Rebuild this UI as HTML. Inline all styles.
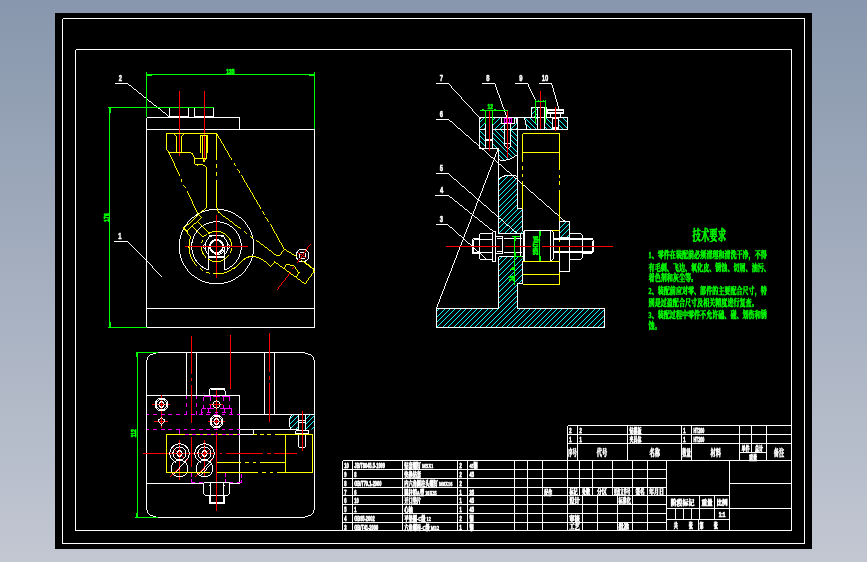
<!DOCTYPE html>
<html lang="zh-CN">
<head>
<meta charset="utf-8">
<title>CAD drawing</title>
<style>
html,body{margin:0;padding:0;background:#a6aec0;}
body{width:867px;height:562px;overflow:hidden;}
svg{display:block;}
text{white-space:pre;}
</style>
</head>
<body>
<svg width="867" height="562" viewBox="0 0 867 562" shape-rendering="crispEdges" fill="none" stroke-width="1" font-family="'Liberation Sans', 'Noto Sans CJK SC', sans-serif">
<defs><linearGradient id="bg" x1="0" y1="0" x2="0" y2="1"><stop offset="0" stop-color="#8897ad"/><stop offset="1" stop-color="#c2c7d2"/></linearGradient>
<clipPath id="h1"><path d="M298.5,429.5 L297.94,429.5 L297.02,429.5 L296.13,429.5 L295.27,429.5 L294.45,429.5 L293.68,429.5 L292.96,429.5 L292.29,429.5 L291.69,429.5 L291.14,429.03 L290.66,428.17 L290.25,427.28 L289.91,426.36 L289.65,425.42 L289.45,424.46 L289.34,423.48 L289.3,422.5 L289.34,421.52 L289.45,420.54 L289.65,419.58 L289.91,418.64 L290.25,417.72 L290.66,416.83 L291.14,415.97 L291.69,415.15 L292.29,414.5 L292.96,414.5 L293.68,414.5 L294.45,414.5 L295.27,414.5 L296.13,414.5 L297.02,414.5 L297.94,414.5 L298.5,414.5Z M305.5,414.5 L314.5,414.5 L314.5,429.5 L305.5,429.5Z" clip-rule="evenodd"/></clipPath>
<clipPath id="h2"><path d="M436.5,308.5 L498.5,308.5 L498.5,256.5 L522.5,256.5 L522.5,283.5 L517.5,283.5 L517.5,308.5 L604.5,308.5 L604.5,327.5 L436.5,327.5Z" clip-rule="evenodd"/></clipPath>
<clipPath id="h3"><path d="M498.5,233.5 L498.5,178.5 L498.5,179.14 L500.4,177.93 L502.3,176.93 L504.2,176.14 L506.1,175.56 L508,175.18 L509.9,175.01 L511.8,175.05 L513.7,175.29 L515.6,175.75 L517.5,176.41 L517.5,208.5 L522.5,208.5 L522.5,233.5Z" clip-rule="evenodd"/></clipPath>
<clipPath id="h4"><path d="M479.5,129.5 L517.5,129.5 L517.5,154.5 L515.6,155.77 L513.7,157.03 L511.8,158.09 L509.9,158.94 L508,159.59 L506.1,160.03 L504.2,160.26 L502.3,160.28 L500.4,160.05 L498.5,159.6 L498.5,148.5 L479.5,148.5Z M485.5,129.5 L492.5,129.5 L492.5,148.5 L485.5,148.5Z M504.5,129.5 L510.5,129.5 L510.5,146 L507.5,149 L504.5,146Z" clip-rule="evenodd"/></clipPath>
<clipPath id="h5"><path d="M479.5,117.5 L517.5,117.5 L517.5,129.5 L479.5,129.5Z M485.5,117.5 L492.5,117.5 L492.5,129.5 L485.5,129.5Z M501.5,117.5 L514,117.5 L514,123.5 L510.5,123.5 L510.5,129.5 L504.5,129.5 L504.5,123.5 L501.5,123.5Z" clip-rule="evenodd"/></clipPath>
<clipPath id="h6"><path d="M524.5,117.5 L567.5,117.5 L567.5,129.5 L527,129.5Z M537.5,117.5 L544,117.5 L544,129.5 L537.5,129.5Z M552.5,117.5 L558.5,117.5 L558.5,129.5 L552.5,129.5Z" clip-rule="evenodd"/></clipPath>
<clipPath id="h7"><path d="M531.5,107.5 L546.5,107.5 L546.5,117.5 L531.5,117.5Z M537.5,107.5 L544,107.5 L544,117.5 L537.5,117.5Z" clip-rule="evenodd"/></clipPath>
<clipPath id="h8"><path d="M559.5,221.5 L569.5,221.5 L569.5,237.5 L559.5,237.5Z" clip-rule="evenodd"/></clipPath>
</defs>
<rect x="0" y="0" width="867" height="562" fill="url(#bg)"/>
<g>
<rect x="55" y="13" width="757" height="536" fill="#000"/>
<polyline points="62.5,18.5 804.5,18.5 804.5,543.5 62.5,543.5 62.5,18.5" stroke="#fff"/>
<polyline points="75.5,49.5 791.5,49.5 791.5,530.5 75.5,530.5 75.5,49.5" stroke="#fff"/>
<polyline points="146.5,117.5 146.5,327.5 314.5,327.5 314.5,129.5" stroke="#fff"/>
<line x1="146.5" y1="129.5" x2="314.5" y2="129.5" stroke="#fff"/>
<line x1="146.5" y1="308.5" x2="314.5" y2="308.5" stroke="#fff"/>
<polyline points="146.5,117.5 239.5,117.5 239.5,129.5" stroke="#fff"/>
<polyline points="169.5,107.5 169.5,116.5 188.5,116.5 188.5,107.5" stroke="#fff"/>
<polyline points="194.5,107.5 194.5,116.5 213.5,116.5 213.5,107.5" stroke="#fff"/>
<path fill="#fff" stroke="none" d="M254.31,246L254.26,248.55L253.26,248.55L253.31,246ZM254.3,247.55L254.14,250.1L253.14,250.1L253.3,247.55ZM254.22,249.1L253.96,251.64L252.96,251.64L253.22,249.1ZM254.08,250.64L253.71,253.18L252.71,253.18L253.08,250.64ZM253.88,252.18L253.4,254.7L252.4,254.7L252.88,252.18ZM253.61,253.7L253.03,256.22L252.03,256.22L252.61,253.7ZM253.28,255.22L252.59,257.71L251.59,257.71L252.28,255.22ZM252.89,256.71L252.09,259.19L251.09,259.19L251.89,256.71ZM252.44,258.19L251.53,260.64L250.53,260.64L251.44,258.19ZM251.92,259.64L250.91,262.08L249.91,262.08L250.92,259.64ZM251.35,261.08L250.23,263.48L249.23,263.48L250.35,261.08ZM250.72,262.48L249.49,264.86L248.49,264.86L249.72,262.48ZM250.03,263.86L248.69,266.21L247.69,266.21L249.03,263.86ZM249.29,265.21L247.83,267.52L246.83,267.52L248.29,265.21ZM248.49,266.52L246.92,268.8L245.92,268.8L247.49,266.52ZM247.64,267.8L245.96,270.04L244.96,270.04L246.64,267.8ZM246.74,269.04L244.94,271.24L243.94,271.24L245.74,269.04ZM245.8,270.24L243.87,272.4L242.87,272.4L244.8,270.24ZM244.8,271.4L242.75,273.51L241.75,273.51L243.8,271.4ZM241.11,274.06L243.24,272.04L243.24,273.04L241.11,275.06ZM239.94,275.04L242.11,273.14L242.11,274.14L239.94,276.04ZM238.73,275.97L240.94,274.2L240.94,275.2L238.73,276.97ZM237.48,276.86L239.73,275.2L239.73,276.2L237.48,277.86ZM236.2,277.7L238.48,276.16L238.48,277.16L236.2,278.7ZM234.87,278.48L237.2,277.05L237.2,278.05L234.87,279.48ZM233.52,279.21L235.87,277.89L235.87,278.89L233.52,280.21ZM232.13,279.88L234.52,278.68L234.52,279.68L232.13,280.88ZM230.72,280.5L233.13,279.4L233.13,280.4L230.72,281.5ZM229.28,281.06L231.72,280.07L231.72,281.07L229.28,282.06ZM227.82,281.56L230.28,280.68L230.28,281.68L227.82,282.56ZM226.34,281.99L228.82,281.22L228.82,282.22L226.34,282.99ZM224.84,282.37L227.34,281.71L227.34,282.71L224.84,283.37ZM223.32,282.68L225.84,282.13L225.84,283.13L223.32,283.68ZM221.8,282.94L224.32,282.48L224.32,283.48L221.8,283.94ZM220.26,283.12L222.8,282.78L222.8,283.78L220.26,284.12ZM218.71,283.25L221.26,283.01L221.26,284.01L218.71,284.25ZM217.16,283.31L219.71,283.18L219.71,284.18L217.16,284.31ZM215.61,283.3L218.16,283.28L218.16,284.28L215.61,284.3ZM214.06,283.23L216.61,283.31L216.61,284.31L214.06,284.23ZM212.51,283.1L215.06,283.29L215.06,284.29L212.51,284.1ZM210.97,282.9L213.51,283.19L213.51,284.19L210.97,283.9ZM209.44,282.64L211.97,283.04L211.97,284.04L209.44,283.64ZM207.92,282.31L210.44,282.82L210.44,283.82L207.92,283.31ZM206.41,281.92L208.92,282.54L208.92,283.54L206.41,282.92ZM204.92,281.47L207.41,282.19L207.41,283.19L204.92,282.47ZM203.45,280.96L205.92,281.78L205.92,282.78L203.45,281.96ZM202,280.38L204.45,281.31L204.45,282.31L202,281.38ZM200.57,279.74L203,280.79L203,281.79L200.57,280.74ZM199.17,279.05L201.57,280.2L201.57,281.2L199.17,280.05ZM197.8,278.29L200.17,279.55L200.17,280.55L197.8,279.29ZM196.46,277.48L198.8,278.85L198.8,279.85L196.46,278.48ZM195.16,276.61L197.46,278.1L197.46,279.1L195.16,277.61ZM193.89,275.69L196.16,277.29L196.16,278.29L193.89,276.69ZM192.66,274.71L194.89,276.42L194.89,277.42L192.66,275.71ZM191.47,273.68L193.66,275.51L193.66,276.51L191.47,274.68ZM190.32,272.6L192.47,274.55L192.47,275.55L190.32,273.6ZM189.22,271.47L191.32,273.55L191.32,274.55L189.22,272.47ZM188.7,270.82L190.68,272.96L189.68,272.96L187.7,270.82ZM187.72,269.64L189.59,271.82L188.59,271.82L186.72,269.64ZM186.8,268.42L188.54,270.64L187.54,270.64L185.8,268.42ZM185.93,267.16L187.55,269.42L186.55,269.42L184.93,267.16ZM185.1,265.87L186.62,268.16L185.62,268.16L184.1,265.87ZM184.33,264.54L185.73,266.87L184.73,266.87L183.33,264.54ZM183.62,263.18L184.91,265.54L183.91,265.54L182.62,263.18ZM182.96,261.78L184.14,264.18L183.14,264.18L181.96,261.78ZM182.36,260.36L183.42,262.78L182.42,262.78L181.36,260.36ZM181.81,258.92L182.77,261.36L181.77,261.36L180.81,258.92ZM181.33,257.45L182.18,259.92L181.18,259.92L180.33,257.45ZM180.91,255.97L181.65,258.45L180.65,258.45L179.91,255.97ZM180.55,254.46L181.18,256.97L180.18,256.97L179.55,254.46ZM180.25,252.94L180.78,255.46L179.78,255.46L179.25,252.94ZM180.01,251.41L180.44,253.94L179.44,253.94L179.01,251.41ZM179.84,249.87L180.16,252.41L179.16,252.41L178.84,249.87ZM179.73,248.33L179.94,250.87L178.94,250.87L178.73,248.33ZM179.69,246.78L179.79,249.33L178.79,249.33L178.69,246.78ZM179.71,245.22L179.71,247.78L178.71,247.78L178.71,245.22ZM179.79,243.67L179.69,246.22L178.69,246.22L178.79,243.67ZM179.94,242.13L179.73,244.67L178.73,244.67L178.94,242.13ZM180.16,240.59L179.84,243.13L178.84,243.13L179.16,240.59ZM180.44,239.06L180.01,241.59L179.01,241.59L179.44,239.06ZM180.78,237.54L180.25,240.06L179.25,240.06L179.78,237.54ZM181.18,236.03L180.55,238.54L179.55,238.54L180.18,236.03ZM181.65,234.55L180.91,237.03L179.91,237.03L180.65,234.55ZM182.18,233.08L181.33,235.55L180.33,235.55L181.18,233.08ZM182.77,231.64L181.81,234.08L180.81,234.08L181.77,231.64ZM183.42,230.22L182.36,232.64L181.36,232.64L182.42,230.22ZM184.14,228.82L182.96,231.22L181.96,231.22L183.14,228.82ZM184.91,227.46L183.62,229.82L182.62,229.82L183.91,227.46ZM185.73,226.13L184.33,228.46L183.33,228.46L184.73,226.13ZM186.62,224.84L185.1,227.13L184.1,227.13L185.62,224.84ZM187.55,223.58L185.93,225.84L184.93,225.84L186.55,223.58ZM188.54,222.36L186.8,224.58L185.8,224.58L187.54,222.36ZM189.59,221.18L187.72,223.36L186.72,223.36L188.59,221.18ZM190.68,220.04L188.7,222.18L187.7,222.18L189.68,220.04ZM189.22,220.53L191.32,218.45L191.32,219.45L189.22,221.53ZM190.32,219.4L192.47,217.45L192.47,218.45L190.32,220.4ZM191.47,218.32L193.66,216.49L193.66,217.49L191.47,219.32ZM192.66,217.29L194.89,215.58L194.89,216.58L192.66,218.29ZM193.89,216.31L196.16,214.71L196.16,215.71L193.89,217.31ZM195.16,215.39L197.46,213.9L197.46,214.9L195.16,216.39ZM196.46,214.52L198.8,213.15L198.8,214.15L196.46,215.52ZM197.8,213.71L200.17,212.45L200.17,213.45L197.8,214.71ZM199.17,212.95L201.57,211.8L201.57,212.8L199.17,213.95ZM200.57,212.26L203,211.21L203,212.21L200.57,213.26ZM202,211.62L204.45,210.69L204.45,211.69L202,212.62ZM203.45,211.04L205.92,210.22L205.92,211.22L203.45,212.04ZM204.92,210.53L207.41,209.81L207.41,210.81L204.92,211.53ZM206.41,210.08L208.92,209.46L208.92,210.46L206.41,211.08ZM207.92,209.69L210.44,209.18L210.44,210.18L207.92,210.69ZM209.44,209.36L211.97,208.96L211.97,209.96L209.44,210.36ZM210.97,209.1L213.51,208.81L213.51,209.81L210.97,210.1ZM212.51,208.9L215.06,208.71L215.06,209.71L212.51,209.9ZM214.06,208.77L216.61,208.69L216.61,209.69L214.06,209.77ZM215.61,208.7L218.16,208.72L218.16,209.72L215.61,209.7ZM217.16,208.69L219.71,208.82L219.71,209.82L217.16,209.69ZM218.71,208.75L221.26,208.99L221.26,209.99L218.71,209.75ZM220.26,208.88L222.8,209.22L222.8,210.22L220.26,209.88ZM221.8,209.06L224.32,209.52L224.32,210.52L221.8,210.06ZM223.32,209.32L225.84,209.87L225.84,210.87L223.32,210.32ZM224.84,209.63L227.34,210.29L227.34,211.29L224.84,210.63ZM226.34,210.01L228.82,210.78L228.82,211.78L226.34,211.01ZM227.82,210.44L230.28,211.32L230.28,212.32L227.82,211.44ZM229.28,210.94L231.72,211.93L231.72,212.93L229.28,211.94ZM230.72,211.5L233.13,212.6L233.13,213.6L230.72,212.5ZM232.13,212.12L234.52,213.32L234.52,214.32L232.13,213.12ZM233.52,212.79L235.87,214.11L235.87,215.11L233.52,213.79ZM234.87,213.52L237.2,214.95L237.2,215.95L234.87,214.52ZM236.2,214.3L238.48,215.84L238.48,216.84L236.2,215.3ZM237.48,215.14L239.73,216.8L239.73,217.8L237.48,216.14ZM238.73,216.03L240.94,217.8L240.94,218.8L238.73,217.03ZM239.94,216.96L242.11,218.86L242.11,219.86L239.94,217.96ZM241.11,217.94L243.24,219.96L243.24,220.96L241.11,218.94ZM242.75,219.49L244.8,221.6L243.8,221.6L241.75,219.49ZM243.87,220.6L245.8,222.76L244.8,222.76L242.87,220.6ZM244.94,221.76L246.74,223.96L245.74,223.96L243.94,221.76ZM245.96,222.96L247.64,225.2L246.64,225.2L244.96,222.96ZM246.92,224.2L248.49,226.48L247.49,226.48L245.92,224.2ZM247.83,225.48L249.29,227.79L248.29,227.79L246.83,225.48ZM248.69,226.79L250.03,229.14L249.03,229.14L247.69,226.79ZM249.49,228.14L250.72,230.52L249.72,230.52L248.49,228.14ZM250.23,229.52L251.35,231.92L250.35,231.92L249.23,229.52ZM250.91,230.92L251.92,233.36L250.92,233.36L249.91,230.92ZM251.53,232.36L252.44,234.81L251.44,234.81L250.53,232.36ZM252.09,233.81L252.89,236.29L251.89,236.29L251.09,233.81ZM252.59,235.29L253.28,237.78L252.28,237.78L251.59,235.29ZM253.03,236.78L253.61,239.3L252.61,239.3L252.03,236.78ZM253.4,238.3L253.88,240.82L252.88,240.82L252.4,238.3ZM253.71,239.82L254.08,242.36L253.08,242.36L252.71,239.82ZM253.96,241.36L254.22,243.9L253.22,243.9L252.96,241.36ZM254.14,242.9L254.3,245.45L253.3,245.45L253.14,242.9ZM254.26,244.45L254.31,247L253.31,247L253.26,244.45Z"/>
<path fill="#fff" stroke="none" d="M205.65,268.34L208.8,269.61L208.8,270.61L205.65,269.34ZM203.59,267.21L206.65,268.8L206.65,269.8L203.59,268.21ZM201.64,265.9L204.59,267.79L204.59,268.79L201.64,266.9ZM199.82,264.4L202.64,266.61L202.64,267.61L199.82,265.4ZM198.13,262.73L200.82,265.27L200.82,266.27L198.13,263.73ZM197.17,261.46L199.57,264.2L198.57,264.2L196.17,261.46ZM195.89,259.58L197.97,262.46L196.97,262.46L194.89,259.58ZM194.78,257.58L196.54,260.58L195.54,260.58L193.78,257.58ZM193.85,255.48L195.31,258.58L194.31,258.58L192.85,255.48ZM193.12,253.3L194.27,256.48L193.27,256.48L192.12,253.3ZM192.59,251.06L193.43,254.3L192.43,254.3L191.59,251.06ZM192.28,248.77L192.8,252.06L191.8,252.06L191.28,248.77ZM192.17,246.46L192.39,249.77L191.39,249.77L191.17,246.46ZM192.28,244.14L192.19,247.46L191.19,247.46L191.28,244.14ZM192.61,241.84L192.21,245.14L191.21,245.14L191.61,241.84ZM193.16,239.58L192.44,242.84L191.44,242.84L192.16,239.58ZM193.91,237.37L192.89,240.58L191.89,240.58L192.91,237.37ZM194.87,235.24L193.54,238.37L192.54,238.37L193.87,235.24ZM196.03,233.2L194.39,236.24L193.39,236.24L195.03,233.2ZM197.38,231.27L195.43,234.2L194.43,234.2L196.38,231.27ZM198.92,229.47L196.64,232.27L195.64,232.27L197.92,229.47ZM200.62,227.82L198.02,230.47L197.02,230.47L199.62,227.82ZM199.13,228.24L201.9,225.9L201.9,226.9L199.13,229.24ZM200.9,226.67L203.81,224.65L203.81,225.65L200.9,227.67ZM202.81,225.28L205.83,223.58L205.83,224.58L202.81,226.28ZM204.83,224.08L207.94,222.69L207.94,223.69L204.83,225.08ZM206.94,223.08L210.14,222L210.14,223L206.94,224.08ZM209.14,222.29L212.39,221.51L212.39,222.51L209.14,223.29ZM211.39,221.7L214.68,221.24L214.68,222.24L211.39,222.7ZM213.68,221.33L217,221.18L217,222.18L213.68,222.33ZM216,221.18L219.32,221.33L219.32,222.33L216,222.18ZM218.32,221.24L221.61,221.7L221.61,222.7L218.32,222.24ZM220.61,221.51L223.86,222.29L223.86,223.29L220.61,222.51ZM222.86,222L226.06,223.08L226.06,224.08L222.86,223ZM225.06,222.69L228.17,224.08L228.17,225.08L225.06,223.69ZM227.17,223.58L230.19,225.28L230.19,226.28L227.17,224.58ZM229.19,224.65L232.1,226.67L232.1,227.67L229.19,225.65ZM231.1,225.9L233.87,228.24L233.87,229.24L231.1,226.9ZM233.38,227.82L235.98,230.47L234.98,230.47L232.38,227.82ZM235.08,229.47L237.36,232.27L236.36,232.27L234.08,229.47ZM236.62,231.27L238.57,234.2L237.57,234.2L235.62,231.27ZM237.97,233.2L239.61,236.24L238.61,236.24L236.97,233.2ZM239.13,235.24L240.46,238.37L239.46,238.37L238.13,235.24ZM240.09,237.37L241.11,240.58L240.11,240.58L239.09,237.37ZM240.84,239.58L241.56,242.84L240.56,242.84L239.84,239.58ZM241.39,241.84L241.79,245.14L240.79,245.14L240.39,241.84ZM241.72,244.14L241.81,247.46L240.81,247.46L240.72,244.14ZM241.83,246.46L241.61,249.77L240.61,249.77L240.83,246.46ZM241.72,248.77L241.2,252.06L240.2,252.06L240.72,248.77ZM241.41,251.06L240.57,254.3L239.57,254.3L240.41,251.06ZM240.88,253.3L239.73,256.48L238.73,256.48L239.88,253.3ZM240.15,255.48L238.69,258.58L237.69,258.58L239.15,255.48ZM239.22,257.58L237.46,260.58L236.46,260.58L238.22,257.58ZM238.11,259.58L236.03,262.46L235.03,262.46L237.11,259.58ZM236.83,261.46L234.43,264.2L233.43,264.2L235.83,261.46ZM232.18,265.27L234.87,262.73L234.87,263.73L232.18,266.27ZM230.36,266.61L233.18,264.4L233.18,265.4L230.36,267.61ZM228.41,267.79L231.36,265.9L231.36,266.9L228.41,268.79ZM226.35,268.8L229.41,267.21L229.41,268.21L226.35,269.8ZM224.2,269.61L227.35,268.34L227.35,269.34L224.2,270.61Z"/>
<line x1="208.5" y1="246.5" x2="208.5" y2="269.91" stroke="#fff"/>
<line x1="224.9" y1="246.5" x2="224.9" y2="269.91" stroke="#fff"/>
<path fill="#fff" stroke="none" d="M230.39,246L223.26,258.34L222.26,258.34L229.39,246Z"/>
<line x1="223.05" y1="257.84" x2="209.95" y2="257.84" stroke="#fff"/>
<path fill="#fff" stroke="none" d="M203.61,246L210.74,258.34L209.74,258.34L202.61,246ZM210.74,234.66L203.61,247L202.61,247L209.74,234.66Z"/>
<line x1="209.95" y1="235.16" x2="223.05" y2="235.16" stroke="#fff"/>
<path fill="#fff" stroke="none" d="M223.26,234.66L230.39,247L229.39,247L222.26,234.66Z"/>
<path fill="#fff" stroke="none" d="M209.52,237.05L211.69,235.72L211.69,236.72L209.52,238.05ZM210.69,236.25L212.95,235.22L212.95,236.22L210.69,237.25ZM211.95,235.61L214.27,234.88L214.27,235.88L211.95,236.61ZM213.27,235.13L215.62,234.69L215.62,235.69L213.27,236.13ZM214.62,234.81L217,234.67L217,235.67L214.62,235.81ZM216,234.67L218.38,234.81L218.38,235.81L216,235.67ZM217.38,234.69L219.73,235.13L219.73,236.13L217.38,235.69ZM218.73,234.88L221.05,235.61L221.05,236.61L218.73,235.88ZM220.05,235.22L222.31,236.25L222.31,237.25L220.05,236.22ZM221.31,235.72L223.48,237.05L223.48,238.05L221.31,236.72Z"/>
<path fill="#fff" stroke="none" d="M221.31,256.28L223.48,254.95L223.48,255.95L221.31,257.28ZM220.05,256.78L222.31,255.75L222.31,256.75L220.05,257.78ZM218.73,257.12L221.05,256.39L221.05,257.39L218.73,258.12ZM217.38,257.31L219.73,256.87L219.73,257.87L217.38,258.31ZM216,257.33L218.38,257.19L218.38,258.19L216,258.33ZM214.62,257.19L217,257.33L217,258.33L214.62,258.19ZM213.27,256.87L215.62,257.31L215.62,258.31L213.27,257.87ZM211.95,256.39L214.27,257.12L214.27,258.12L211.95,257.39ZM210.69,255.75L212.95,256.78L212.95,257.78L210.69,256.75ZM209.52,254.95L211.69,256.28L211.69,257.28L209.52,255.95Z"/>
<path fill="#fff" stroke="none" d="M227.46,242.14L228.1,244.21L227.1,244.21L226.46,242.14ZM227.85,243.21L228.27,245.32L227.27,245.32L226.85,243.21ZM228.12,244.32L228.34,246.44L227.34,246.44L227.12,244.32ZM228.29,245.44L228.29,247.56L227.29,247.56L227.29,245.44ZM228.34,246.56L228.12,248.68L227.12,248.68L227.34,246.56ZM228.27,247.68L227.85,249.79L226.85,249.79L227.27,247.68ZM228.1,248.79L227.46,250.86L226.46,250.86L227.1,248.79Z"/>
<path fill="#fff" stroke="none" d="M205.9,248.79L206.54,250.86L205.54,250.86L204.9,248.79ZM205.73,247.68L206.15,249.79L205.15,249.79L204.73,247.68ZM205.66,246.56L205.88,248.68L204.88,248.68L204.66,246.56ZM205.71,245.44L205.71,247.56L204.71,247.56L204.71,245.44ZM205.88,244.32L205.66,246.44L204.66,246.44L204.88,244.32ZM206.15,243.21L205.73,245.32L204.73,245.32L205.15,243.21ZM206.54,242.14L205.9,244.21L204.9,244.21L205.54,242.14Z"/>
<line x1="210" y1="256.5" x2="223" y2="256.5" stroke="#fff"/>
<path fill="#fff" stroke="none" fill-rule="evenodd" d="M209.1,246.5 a7.4,7.4 0 1 0 14.8,0 a7.4,7.4 0 1 0 -14.8,0 Z M211,246.5 a5.5,5.5 0 1 0 11,0 a5.5,5.5 0 1 0 -11,0 Z"/>
<path fill="#fff" stroke="none" d="M225.29,248.17L224.47,250.48L223.47,250.48L224.29,248.17ZM224.93,249.48L223.69,251.68L222.69,251.68L223.93,249.48ZM224.37,250.68L222.71,252.76L221.71,252.76L223.37,250.68ZM221.08,253.14L223.11,251.32L223.11,252.32L221.08,254.14ZM219.91,253.75L222.08,252.37L222.08,253.37L219.91,254.75ZM218.64,254.19L220.91,253.22L220.91,254.22L218.64,255.19ZM217.3,254.42L219.64,253.85L219.64,254.85L217.3,255.42ZM215.92,254.44L218.3,254.26L218.3,255.26L215.92,255.44ZM214.54,254.23L216.92,254.45L216.92,255.45L214.54,255.23Z"/>
<path fill="#fff" stroke="none" d="M309.36,255L309.07,257.45L308.07,257.45L308.36,255ZM309.31,256.45L308.45,258.83L307.45,258.83L308.31,256.45ZM308.96,257.83L307.5,260.05L306.5,260.05L307.96,257.83ZM305.76,260.53L307.83,258.58L307.83,259.58L305.76,261.53ZM304.5,261.07L306.76,259.76L306.76,260.76L304.5,262.07ZM303.09,261.35L305.5,260.64L305.5,261.64L303.09,262.35ZM301.63,261.32L304.09,261.18L304.09,262.18L301.63,262.32ZM300.19,260.95L302.63,261.38L302.63,262.38L300.19,261.95ZM298.85,260.24L301.19,261.25L301.19,262.25L298.85,261.24ZM297.68,259.21L299.85,260.83L299.85,261.83L297.68,260.21ZM297.32,258.46L299.1,260.58L298.1,260.58L296.32,258.46ZM296.83,257.15L297.99,259.46L296.99,259.46L295.83,257.15ZM296.62,255.73L297.2,258.15L296.2,258.15L295.62,255.73ZM296.74,254.27L296.74,256.73L295.74,256.73L295.74,254.27ZM297.2,252.85L296.62,255.27L295.62,255.27L296.2,252.85ZM297.99,251.54L296.83,253.85L295.83,253.85L296.99,251.54ZM299.1,250.42L297.32,252.54L296.32,252.54L298.1,250.42ZM297.68,250.79L299.85,249.17L299.85,250.17L297.68,251.79ZM298.85,249.76L301.19,248.75L301.19,249.75L298.85,250.76ZM300.19,249.05L302.63,248.62L302.63,249.62L300.19,250.05ZM301.63,248.68L304.09,248.82L304.09,249.82L301.63,249.68ZM303.09,248.65L305.5,249.36L305.5,250.36L303.09,249.65ZM304.5,248.93L306.76,250.24L306.76,251.24L304.5,249.93ZM305.76,249.47L307.83,251.42L307.83,252.42L305.76,250.47ZM307.5,250.95L308.96,253.17L307.96,253.17L306.5,250.95ZM308.45,252.17L309.31,254.55L308.31,254.55L307.45,252.17ZM309.07,253.55L309.36,256L308.36,256L308.07,253.55Z"/>
<path fill="#fff" stroke="none" d="M306.41,255L305.91,257.34L304.91,257.34L305.41,255ZM306.38,256.34L304.84,258.45L303.84,258.45L305.38,256.34ZM303.02,258.43L305.21,257.16L305.21,258.16L303.02,259.43ZM301.66,258.33L304.02,258.09L304.02,259.09L301.66,259.33ZM300.35,257.7L302.66,258.44L302.66,259.44L300.35,258.7ZM299.33,256.49L301.35,258.31L301.35,259.31L299.33,257.49ZM299.55,255.69L300.55,257.94L299.55,257.94L298.55,255.69ZM299.77,254.31L299.77,256.69L298.77,256.69L298.77,254.31ZM300.55,253.06L299.55,255.31L298.55,255.31L299.55,253.06ZM299.33,253.51L301.35,251.69L301.35,252.69L299.33,254.51ZM300.35,252.3L302.66,251.56L302.66,252.56L300.35,253.3ZM301.66,251.67L304.02,251.91L304.02,252.91L301.66,252.67ZM303.02,251.57L305.21,252.84L305.21,253.84L303.02,252.57ZM304.84,252.55L306.38,254.66L305.38,254.66L303.84,252.55ZM305.91,253.66L306.41,256L305.41,256L304.91,253.66Z"/>
<line x1="115" y1="83.5" x2="127.5" y2="83.5" stroke="#fff"/>
<path fill="#fff" stroke="none" d="M127,82.6L168.8,115.9L168.8,116.9L127,83.6Z"/>
<line x1="114" y1="241.5" x2="127.6" y2="241.5" stroke="#fff"/>
<path fill="#fff" stroke="none" d="M127.61,241L162.79,277L161.79,277L126.61,241Z"/>
<line x1="146.5" y1="72" x2="146.5" y2="117" stroke="#0f0"/>
<line x1="314.5" y1="72" x2="314.5" y2="129" stroke="#0f0"/>
<line x1="146.5" y1="74.5" x2="314.5" y2="74.5" stroke="#0f0"/>
<polygon points="147,74 152,74 152,76 147,76" fill="#0f0" stroke="none"/>
<polygon points="309,74 314,74 314,76 309,76" fill="#0f0" stroke="none"/>
<line x1="108" y1="107.5" x2="213.5" y2="107.5" stroke="#0f0"/>
<line x1="109.5" y1="107.5" x2="109.5" y2="327.5" stroke="#0f0"/>
<line x1="108" y1="327.5" x2="146.5" y2="327.5" stroke="#0f0"/>
<polygon points="109,108 111,108 111,113 109,113" fill="#0f0" stroke="none"/>
<polygon points="109,322 111,322 111,327 109,327" fill="#0f0" stroke="none"/>
<line x1="179.5" y1="91" x2="179.5" y2="155.5" stroke="#f00"/>
<line x1="204.5" y1="91" x2="204.5" y2="161" stroke="#f00"/>
<line x1="185" y1="246.5" x2="248" y2="246.5" stroke="#f00"/>
<line x1="216.5" y1="215" x2="216.5" y2="278" stroke="#f00"/>
<path fill="#f00" stroke="none" d="M291.59,271.8L277.31,290.2L276.31,290.2L290.59,271.8Z"/>
<path fill="#f00" stroke="none" d="M295.64,265.5L292.46,269.1L291.46,269.1L294.64,265.5Z"/>
<path fill="#f00" stroke="none" d="M310.65,244.4L297.75,263L296.75,263L309.65,244.4Z"/>
<path fill="#f00" stroke="none" d="M298.3,252.38L306.1,257.42L306.1,258.42L298.3,253.38Z"/>
<path fill="#ff0" stroke="none" d="M166.57,149.1L170.03,153.1L169.03,153.1L165.57,149.1Z"/>
<polyline points="166.5,149.6 166.5,133.5 216.5,133.5 216.5,159.5" stroke="#ff0"/>
<line x1="216.5" y1="163.5" x2="216.5" y2="168" stroke="#ff0"/>
<line x1="216.5" y1="172" x2="216.5" y2="175.5" stroke="#ff0"/>
<line x1="216.5" y1="179.5" x2="216.5" y2="207" stroke="#ff0"/>
<line x1="169.1" y1="152.6" x2="190.6" y2="152.6" stroke="#ff0"/>
<path fill="#ff0" stroke="none" d="M190.1,151.85L193.1,153.35L193.1,154.35L190.1,152.85ZM192.88,153.1L194.72,157.3L193.72,157.3L191.88,153.1Z"/>
<line x1="194" y1="156.8" x2="194" y2="162.4" stroke="#ff0"/>
<path fill="#ff0" stroke="none" d="M194.17,161.9L196.23,165L195.23,165L193.17,161.9ZM194.9,163.84L197.5,164.66L197.5,165.66L194.9,164.84ZM196.5,164.57L201.5,163.83L201.5,164.83L196.5,165.57ZM200.5,163.72L204.5,165.18L204.5,166.18L200.5,164.72ZM203.5,164.67L207.1,167.03L207.1,168.03L203.5,165.67Z"/>
<line x1="206.6" y1="167.2" x2="206.8" y2="207" stroke="#ff0"/>
<line x1="194.6" y1="158" x2="205.7" y2="158" stroke="#ff0"/>
<path fill="#ff0" stroke="none" d="M174.02,133L177.38,136.5L176.38,136.5L173.02,133Z"/>
<line x1="176.4" y1="136" x2="176.4" y2="152.6" stroke="#ff0"/>
<path fill="#ff0" stroke="none" d="M181.1,135.95L184.9,132.55L184.9,133.55L181.1,136.95Z"/>
<line x1="181.6" y1="136" x2="181.6" y2="152.6" stroke="#ff0"/>
<polyline points="200.7,152.6 200.7,135.3 207.7,135.3 207.7,152.6" stroke="#ff0"/>
<line x1="202" y1="135.3" x2="202" y2="158" stroke="#ff0"/>
<line x1="206.4" y1="135.3" x2="206.4" y2="158" stroke="#ff0"/>
<path fill="#ff0" stroke="none" d="M202.12,157.5L205.18,161.5L204.18,161.5L201.12,157.5ZM207.25,157.5L204.45,161.5L203.45,161.5L206.25,157.5Z"/>
<path fill="#ff0" stroke="none" d="M217.21,133.5L232.49,160L231.49,160L216.21,133.5Z"/>
<path fill="#ff0" stroke="none" d="M234.38,163.1L236.42,166.3L235.42,166.3L233.38,163.1Z"/>
<path fill="#ff0" stroke="none" d="M237.79,168.7L240.41,172.9L239.41,172.9L236.79,168.7Z"/>
<path fill="#ff0" stroke="none" d="M241.71,175L261.29,208.5L260.29,208.5L240.71,175Z"/>
<path fill="#ff0" stroke="none" d="M262.7,211L264.8,214.5L263.8,214.5L261.7,211Z"/>
<path fill="#ff0" stroke="none" d="M266.21,217L268.79,221.5L267.79,221.5L265.21,217Z"/>
<path fill="#ff0" stroke="none" d="M270.72,224L285.08,249.7L284.08,249.7L269.72,224Z"/>
<path fill="#ff0" stroke="none" d="M169.37,152.1L180.23,176L179.23,176L168.37,152.1Z"/>
<path fill="#ff0" stroke="none" d="M181.07,178.5L182.53,181.7L181.53,181.7L180.07,178.5Z"/>
<path fill="#ff0" stroke="none" d="M184.24,185L185.96,188.3L184.96,188.3L183.24,185Z"/>
<path fill="#ff0" stroke="none" d="M187.46,191L198.54,214L197.54,214L186.46,191Z"/>
<path fill="#ff0" stroke="none" d="M183.4,228.27L207.3,206.03L207.3,207.03L183.4,229.27ZM183.4,227.36L187.6,231.04L187.6,232.04L183.4,228.36ZM186.6,231.08L202.1,216.22L202.1,217.22L186.6,232.08ZM197.3,212.51L202.1,217.19L202.1,218.19L197.3,213.51Z"/>
<path fill="#ff0" stroke="none" d="M184.02,227.8L187.58,232.5L186.58,232.5L183.02,227.8ZM186.84,231.5L190.26,236.2L189.26,236.2L185.84,231.5Z"/>
<path fill="#ff0" stroke="none" d="M191.6,235.92L190.74,238.26L189.74,238.26L190.6,235.92ZM191.08,237.26L190.35,239.63L189.35,239.63L190.08,237.26ZM190.63,238.63L190.03,241.02L189.03,241.02L189.63,238.63ZM190.26,240.02L189.79,242.42L188.79,242.42L189.26,240.02ZM189.96,241.42L189.61,243.83L188.61,243.83L188.96,241.42ZM189.73,242.83L189.51,245.26L188.51,245.26L188.73,242.83ZM189.57,244.26L189.48,246.68L188.48,246.68L188.57,244.26ZM189.49,245.68L189.53,248.11L188.53,248.11L188.49,245.68ZM189.49,247.11L189.65,249.54L188.65,249.54L188.49,247.11ZM189.56,248.54L189.85,250.96L188.85,250.96L188.56,248.54ZM189.7,249.96L190.11,252.36L189.11,252.36L188.7,249.96ZM189.92,251.36L190.46,253.76L189.46,253.76L188.92,251.36ZM190.2,252.76L190.87,255.13L189.87,255.13L189.2,252.76ZM190.56,254.13L191.36,256.49L190.36,256.49L189.56,254.13ZM190.99,255.49L191.91,257.82L190.91,257.82L189.99,255.49ZM191.49,256.82L192.54,259.11L191.54,259.11L190.49,256.82ZM192.05,258.11L193.24,260.38L192.24,260.38L191.05,258.11ZM192.68,259.38L194,261.61L193,261.61L191.68,259.38ZM193.37,260.61L194.82,262.8L193.82,262.8L192.37,260.61ZM194.12,261.8L195.71,263.95L194.71,263.95L193.12,261.8ZM194.93,262.95L196.67,265.05L195.67,265.05L193.93,262.95ZM195.79,264.05L197.68,266.1L196.68,266.1L194.79,264.05Z"/>
<path fill="#ff0" stroke="none" d="M199.84,267.89L201.42,269.02L201.42,270.02L199.84,268.89ZM200.42,268.33L202.02,269.4L202.02,270.4L200.42,269.33ZM201.02,268.75L202.63,269.76L202.63,270.76L201.02,269.75ZM201.63,269.15L203.25,270.11L203.25,271.11L201.63,270.15Z"/>
<path fill="#ff0" stroke="none" d="M206.14,271.49L207.93,272.15L207.93,273.15L206.14,272.49ZM206.93,271.8L208.73,272.39L208.73,273.39L206.93,272.8ZM207.73,272.08L209.54,272.62L209.54,273.62L207.73,273.08ZM208.54,272.33L210.35,272.82L210.35,273.82L208.54,273.33Z"/>
<path fill="#ff0" stroke="none" d="M212.65,273.25L215.05,273.48L215.05,274.48L212.65,274.25ZM214.05,273.41L216.46,273.52L216.46,274.52L214.05,274.41ZM215.46,273.5L217.87,273.48L217.87,274.48L215.46,274.5ZM216.87,273.51L219.28,273.38L219.28,274.38L216.87,274.51ZM218.28,273.46L220.68,273.2L220.68,274.2L218.28,274.46ZM219.68,273.33L222.07,272.95L222.07,273.95L219.68,274.33ZM221.07,273.14L223.45,272.63L223.45,273.63L221.07,274.14ZM222.45,272.87L224.81,272.23L224.81,273.23L222.45,273.87ZM223.81,272.53L226.15,271.77L226.15,272.77L223.81,273.53ZM225.15,272.12L227.47,271.24L227.47,272.24L225.15,273.12ZM226.47,271.65L228.76,270.64L228.76,271.64L226.47,272.65ZM227.76,271.11L230.02,269.97L230.02,270.97L227.76,272.11ZM229.02,270.51L231.24,269.24L231.24,270.24L229.02,271.51ZM230.24,269.85L232.43,268.44L232.43,269.44L230.24,270.85ZM231.43,269.12L233.57,267.59L233.57,268.59L231.43,270.12ZM232.57,268.34L234.68,266.67L234.68,267.67L232.57,269.34Z"/>
<path fill="#ff0" stroke="none" d="M196.8,220.82L208.9,232.48L208.9,233.48L196.8,221.82Z"/>
<path fill="#ff0" stroke="none" d="M208.17,233.24L210.47,232L210.47,233L208.17,234.24ZM209.47,232.48L211.84,231.5L211.84,232.5L209.47,233.48ZM210.84,231.86L213.25,231.12L213.25,232.12L210.84,232.86ZM212.25,231.37L214.7,230.87L214.7,231.87L212.25,232.37ZM213.7,231.03L216.17,230.77L216.17,231.77L213.7,232.03ZM215.17,230.83L217.64,230.81L217.64,231.81L215.17,231.83ZM216.64,230.77L219.12,230.99L219.12,231.99L216.64,231.77ZM218.12,230.85L220.57,231.32L220.57,232.32L218.12,231.85ZM219.57,231.08L221.98,231.79L221.98,232.79L219.57,232.08ZM220.98,231.44L223.36,232.39L223.36,233.39L220.98,232.44ZM222.36,231.93L224.67,233.13L224.67,234.13L222.36,232.93ZM223.67,232.55L225.9,234.01L225.9,235.01L223.67,233.55ZM224.9,233.28L227.06,235L227.06,236L224.9,234.28ZM226.06,234.12L228.12,236.12L228.12,237.12L226.06,235.12ZM227.69,235.63L229.49,237.76L228.49,237.76L226.69,235.63ZM228.73,236.76L230.26,238.98L229.26,238.98L227.73,236.76ZM229.63,237.98L230.91,240.27L229.91,240.27L228.63,237.98ZM230.41,239.27L231.43,241.62L230.43,241.62L229.41,239.27ZM231.06,240.62L231.83,243.03L230.83,243.03L230.06,240.62ZM231.56,242.03L232.1,244.47L231.1,244.47L230.56,242.03ZM231.93,243.47L232.22,245.94L231.22,245.94L230.93,243.47Z"/>
<path fill="#ff0" stroke="none" d="M192.2,225.92L203.3,236.58L203.3,237.58L192.2,226.92ZM202.3,236.34L207,234.06L207,235.06L202.3,237.34Z"/>
<path fill="#ff0" stroke="none" d="M232.14,248.12L231.78,250.16L230.78,250.16L231.14,248.12ZM231.99,249.16L231.49,251.19L230.49,251.19L230.99,249.16ZM231.77,250.19L231.12,252.2L230.12,252.2L230.77,250.19ZM231.49,251.2L230.68,253.18L229.68,253.18L230.49,251.2Z"/>
<path fill="#ff0" stroke="none" d="M229.39,255.36L227.97,257.07L226.97,257.07L228.39,255.36ZM228.85,256.07L227.28,257.75L226.28,257.75L227.85,256.07ZM226.07,257.85L227.75,256.28L227.75,257.28L226.07,258.85ZM225.36,258.39L227.07,256.97L227.07,257.97L225.36,259.39Z"/>
<path fill="#ff0" stroke="none" d="M221.94,260.23L224.14,259.18L224.14,260.18L221.94,261.23ZM220.7,260.64L222.94,259.8L222.94,260.8L220.7,261.64ZM219.42,260.95L221.7,260.32L221.7,261.32L219.42,261.95ZM218.12,261.14L220.42,260.72L220.42,261.72L218.12,262.14ZM216.8,261.23L219.12,261L219.12,262L216.8,262.23ZM215.47,261.2L217.8,261.17L217.8,262.17L215.47,262.2ZM214.15,261.05L216.47,261.23L216.47,262.23L214.15,262.05ZM212.84,260.78L215.15,261.17L215.15,262.17L212.84,261.78ZM211.56,260.41L213.84,261L213.84,262L211.56,261.41ZM210.31,259.92L212.56,260.71L212.56,261.71L210.31,260.92ZM209.1,259.32L211.31,260.32L211.31,261.32L209.1,260.32ZM207.95,258.61L210.1,259.83L210.1,260.83L207.95,259.61Z"/>
<path fill="#ff0" stroke="none" d="M205.11,256.04L206.92,257.93L205.92,257.93L204.11,256.04ZM204.4,255.08L205.99,257.04L204.99,257.04L203.4,255.08ZM203.77,254.05L205.15,256.08L204.15,256.08L202.77,254.05ZM203.21,252.98L204.39,255.05L203.39,255.05L202.21,252.98ZM202.74,251.86L203.73,253.98L202.73,253.98L201.74,251.86ZM202.36,250.7L203.16,252.86L202.16,252.86L201.36,250.7ZM202.07,249.51L202.68,251.7L201.68,251.7L201.07,249.51ZM201.88,248.29L202.31,250.51L201.31,250.51L200.88,248.29ZM201.78,247.06L202.03,249.29L201.03,249.29L200.78,247.06Z"/>
<path fill="#ff0" stroke="none" d="M202.72,241.24L202.23,242.81L201.23,242.81L201.72,241.24ZM202.94,240.68L202.39,242.24L201.39,242.24L201.94,240.68ZM203.18,240.12L202.56,241.68L201.56,241.68L202.18,240.12ZM203.45,239.58L202.76,241.12L201.76,241.12L202.45,239.58Z"/>
<path fill="#ff0" stroke="none" d="M216.79,206.5L219.31,212.6L218.31,212.6L215.79,206.5ZM218.1,211.16L222.3,214.84L222.3,215.84L218.1,212.16ZM221.3,214.06L229.7,219.84L229.7,220.84L221.3,215.06ZM228.7,219.1L239,227.3L239,228.3L228.7,220.1ZM238,226.7L241.3,228L241.3,229L238,227.7Z"/>
<path fill="#ff0" stroke="none" d="M244,230.59L247.3,233.31L247.3,234.31L244,231.59Z"/>
<path fill="#ff0" stroke="none" d="M249.7,235.34L252.5,237.36L252.5,238.36L249.7,236.34Z"/>
<path fill="#ff0" stroke="none" d="M255.5,239.12L276.7,255.18L276.7,256.18L255.5,240.12Z"/>
<line x1="276.2" y1="255.3" x2="279.7" y2="255.3" stroke="#ff0"/>
<path fill="#ff0" stroke="none" d="M285.18,248.8L279.82,255.8L278.82,255.8L284.18,248.8ZM283.8,248.51L296.8,256.09L296.8,257.09L283.8,249.51Z"/>
<path fill="#ff0" stroke="none" d="M301,259.63L314,269.27L314,270.27L301,260.63Z"/>
<path fill="#ff0" stroke="none" d="M240.97,262.5L234.83,269L233.83,269L239.97,262.5ZM239.5,262.96L244.5,258.34L244.5,259.34L239.5,263.96ZM243.5,259.06L248.5,256.44L248.5,257.44L243.5,260.06ZM247.5,256.8L253.6,255.6L253.6,256.6L247.5,257.8ZM252.6,255.57L258.5,257.13L258.5,258.13L252.6,256.57ZM257.5,256.75L264,259.95L264,260.95L257.5,257.75ZM263,259.26L271.2,266.54L271.2,267.54L263,260.26ZM275.88,261.7L270.72,267.1L269.72,267.1L274.88,261.7ZM274.4,261.36L284.3,268.14L284.3,269.14L274.4,262.36ZM283.3,267.43L304.5,283.17L304.5,284.17L283.3,268.43ZM303.5,282.89L306.2,282.41L306.2,283.41L303.5,283.89ZM314.66,271.3L305.84,283.5L304.84,283.5L313.66,271.3ZM313.6,268.4L314.4,272.3L313.4,272.3L312.6,268.4ZM304.6,261.07L313.7,268.83L313.7,269.83L304.6,262.07Z"/>
<path fill="#ff0" stroke="none" d="M287.44,263.7L283.96,268.8L282.96,268.8L286.44,263.7ZM286.1,263.58L294.7,265.62L294.7,266.62L286.1,264.58ZM294.37,265.5L299.63,273.4L298.63,273.4L293.37,265.5ZM299.58,272.4L296.72,277.5L295.72,277.5L298.58,272.4Z"/>
<path fill="#fff" stroke="none" d="M148.58,357L146.82,362L145.82,362L147.58,357ZM151.5,354.4L147.9,358L146.9,358L150.5,354.4ZM150,354.6L155.2,352.5L155.2,353.5L150,355.6ZM154.2,352.81L158.5,351.89L158.5,352.89L154.2,353.81Z"/>
<path fill="#fff" stroke="none" d="M313.43,357L315.18,362L314.18,362L312.43,357ZM310,353.9L313.6,357.5L313.6,358.5L310,354.9ZM305.8,352.5L311,354.6L311,355.6L305.8,353.5ZM302.5,351.89L306.8,352.81L306.8,353.81L302.5,352.89Z"/>
<path fill="#fff" stroke="none" d="M315.18,508L313.43,513L312.43,513L314.18,508ZM310,515.1L313.6,511.5L313.6,512.5L310,516.1ZM305.8,516.5L311,514.4L311,515.4L305.8,517.5ZM302.5,517.11L306.8,516.19L306.8,517.19L302.5,518.11Z"/>
<path fill="#fff" stroke="none" d="M146.82,508L148.58,513L147.58,513L145.82,508ZM147.9,512L151.5,515.6L150.5,515.6L146.9,512ZM150,514.4L155.2,516.5L155.2,517.5L150,515.4ZM154.2,516.19L158.5,517.11L158.5,518.11L154.2,517.19Z"/>
<line x1="158" y1="352.5" x2="303" y2="352.5" stroke="#fff"/>
<line x1="158" y1="517.5" x2="303" y2="517.5" stroke="#fff"/>
<line x1="146.5" y1="361.5" x2="146.5" y2="508.5" stroke="#fff"/>
<line x1="314.5" y1="361.5" x2="314.5" y2="508.5" stroke="#fff"/>
<line x1="186.5" y1="352.5" x2="186.5" y2="395.5" stroke="#fff"/>
<line x1="196.5" y1="352.5" x2="196.5" y2="395.5" stroke="#fff"/>
<line x1="264.5" y1="352.5" x2="264.5" y2="414.5" stroke="#fff"/>
<line x1="274.5" y1="352.5" x2="274.5" y2="414.5" stroke="#fff"/>
<polyline points="146.5,395.5 239.5,395.5 239.5,483.5 229.5,483.5" stroke="#fff"/>
<line x1="146.5" y1="483.5" x2="203.5" y2="483.5" stroke="#fff"/>
<line x1="239.5" y1="414.5" x2="314.5" y2="414.5" stroke="#fff"/>
<line x1="239.5" y1="429.5" x2="295" y2="429.5" stroke="#fff"/>
<polyline points="239.5,434.5 253.5,434.5 253.5,429.5" stroke="#fff"/>
<path d="M209.5,395.5 V390.5 Q209.5,388.5 211.5,388.5 H223 Q225,388.5 225,390.5 V395.5" stroke="#fff"/>
<line x1="210.5" y1="389.5" x2="224" y2="389.5" stroke="#fff"/>
<line x1="203.5" y1="482.5" x2="203.5" y2="493" stroke="#fff"/>
<path fill="#fff" stroke="none" d="M203.6,492.5L206.4,496L205.4,496L202.6,492.5Z"/>
<line x1="205.5" y1="495.5" x2="227.5" y2="495.5" stroke="#fff"/>
<path fill="#fff" stroke="none" d="M230.4,492.5L227.6,496L226.6,496L229.4,492.5Z"/>
<line x1="229.5" y1="493" x2="229.5" y2="482.5" stroke="#fff"/>
<line x1="210.5" y1="482.5" x2="210.5" y2="495.5" stroke="#fff"/>
<line x1="223.5" y1="482.5" x2="223.5" y2="495.5" stroke="#fff"/>
<polyline points="209.5,495.5 224.5,495.5 224.5,503.5 209.5,503.5 209.5,495.5" stroke="#fff"/>
<polyline points="210.5,495.5 223.5,495.5 223.5,502.5 210.5,502.5 210.5,495.5" stroke="#fff"/>
<path clip-path="url(#h1)" d="M276,432.5L298,410.5L298,411.5L276,433.5ZM281,432.5L303,410.5L303,411.5L281,433.5ZM286,432.5L308,410.5L308,411.5L286,433.5ZM292,432.5L314,410.5L314,411.5L292,433.5ZM297,432.5L319,410.5L319,411.5L297,433.5ZM302,432.5L324,410.5L324,411.5L302,433.5ZM308,432.5L330,410.5L330,411.5L308,433.5Z" fill="#0ff" stroke="none"/>
<polyline points="297.94,429.5 297.02,429.5 296.13,429.5 295.27,429.5 294.45,429.5 293.68,429.5 292.96,429.5 292.29,429.5 291.69,429.5" stroke="#fff"/>
<path fill="#fff" stroke="none" d="M290.64,428.1L292.19,429.43L292.19,430.43L290.64,429.1ZM290.88,427.67L291.92,429.53L290.92,429.53L289.88,427.67ZM290.52,426.78L291.39,428.67L290.39,428.67L289.52,426.78ZM290.23,425.86L290.94,427.78L289.94,427.78L289.23,425.86Z"/>
<polyline points="289.91,426.36 289.65,425.42 289.45,424.46 289.34,423.48 289.3,422.5 289.34,421.52 289.45,420.54 289.65,419.58 289.91,418.64" stroke="#fff"/>
<path fill="#fff" stroke="none" d="M290.94,417.22L290.23,419.14L289.23,419.14L289.94,417.22ZM291.39,416.33L290.52,418.22L289.52,418.22L290.39,416.33ZM291.92,415.47L290.88,417.33L289.88,417.33L290.92,415.47ZM292.52,414.65L291.31,416.47L290.31,416.47L291.52,414.65ZM293.26,414L291.72,415.65L290.72,415.65L292.26,414Z"/>
<polyline points="292.29,414.5 292.96,414.5 293.68,414.5 294.45,414.5 295.27,414.5 296.13,414.5 297.02,414.5 297.94,414.5" stroke="#fff"/>
<line x1="298.5" y1="414.5" x2="298.5" y2="429.5" stroke="#fff"/>
<line x1="305.5" y1="414.5" x2="305.5" y2="429.5" stroke="#fff"/>
<line x1="298.5" y1="420.5" x2="305.5" y2="420.5" stroke="#fff"/>
<line x1="298.5" y1="422.5" x2="305.5" y2="422.5" stroke="#fff"/>
<polyline points="295.5,430.5 308.5,430.5 308.5,433.5 295.5,433.5 295.5,430.5" stroke="#fff"/>
<path d="M298.5,434.5 V445.5 Q298.5,447.5 300.5,447.5 H303.5 Q305.5,447.5 305.5,445.5 V434.5" stroke="#fff"/>
<line x1="136" y1="352.5" x2="158" y2="352.5" stroke="#0f0"/>
<line x1="137.5" y1="352.5" x2="137.5" y2="517.5" stroke="#0f0"/>
<line x1="135" y1="517.5" x2="158" y2="517.5" stroke="#0f0"/>
<polygon points="136,352 138,352 138,357 136,357" fill="#0f0" stroke="none"/>
<polygon points="136,513 138,513 138,518 136,518" fill="#0f0" stroke="none"/>
<line x1="191.5" y1="336" x2="191.5" y2="373.7" stroke="#f00"/>
<line x1="191.5" y1="378" x2="191.5" y2="381" stroke="#f00"/>
<line x1="191.5" y1="385" x2="191.5" y2="422.5" stroke="#f00"/>
<line x1="191.5" y1="437" x2="191.5" y2="467" stroke="#f00"/>
<line x1="230.5" y1="335" x2="230.5" y2="388.5" stroke="#f00"/>
<line x1="269.5" y1="333" x2="269.5" y2="371.6" stroke="#f00"/>
<line x1="269.5" y1="376" x2="269.5" y2="379.7" stroke="#f00"/>
<line x1="269.5" y1="383" x2="269.5" y2="422" stroke="#f00"/>
<line x1="216.5" y1="390" x2="216.5" y2="429.7" stroke="#f00"/>
<line x1="216.5" y1="432" x2="216.5" y2="510.7" stroke="#f00"/>
<line x1="152" y1="404.5" x2="170" y2="404.5" stroke="#f00"/>
<line x1="161.5" y1="395" x2="161.5" y2="414" stroke="#f00"/>
<line x1="154" y1="421.5" x2="168" y2="421.5" stroke="#f00"/>
<line x1="161.5" y1="414.7" x2="161.5" y2="427.6" stroke="#f00"/>
<line x1="209" y1="404.5" x2="223" y2="404.5" stroke="#f00"/>
<line x1="208" y1="421.5" x2="225" y2="421.5" stroke="#f00"/>
<line x1="143" y1="453.5" x2="214" y2="453.5" stroke="#f00"/>
<line x1="219.8" y1="453.5" x2="222" y2="453.5" stroke="#f00"/>
<line x1="226" y1="453.5" x2="263" y2="453.5" stroke="#f00"/>
<line x1="267" y1="453.5" x2="270.7" y2="453.5" stroke="#f00"/>
<line x1="274.2" y1="453.5" x2="297" y2="453.5" stroke="#f00"/>
<line x1="179.5" y1="440" x2="179.5" y2="479.7" stroke="#f00"/>
<path fill="#f00" stroke="none" d="M188.39,459L170.31,477.3L169.31,477.3L187.39,459Z"/>
<path fill="#f00" stroke="none" d="M173,447.55L184,457.45L184,458.45L173,448.55Z"/>
<line x1="204.5" y1="440" x2="204.5" y2="476.5" stroke="#f00"/>
<path fill="#f00" stroke="none" d="M213.39,459L195.31,477.3L194.31,477.3L212.39,459Z"/>
<path fill="#f00" stroke="none" d="M200,457.45L211,447.55L211,448.55L200,458.45Z"/>
<line x1="302.5" y1="411" x2="302.5" y2="451" stroke="#f00"/>
<path fill="#fff" stroke="none" d="M168.36,404L168.07,406.45L167.07,406.45L167.36,404ZM168.31,405.45L167.45,407.83L166.45,407.83L167.31,405.45ZM167.96,406.83L166.5,409.05L165.5,409.05L166.96,406.83ZM164.76,409.53L166.83,407.58L166.83,408.58L164.76,410.53ZM163.5,410.07L165.76,408.76L165.76,409.76L163.5,411.07ZM162.09,410.35L164.5,409.64L164.5,410.64L162.09,411.35ZM160.63,410.32L163.09,410.18L163.09,411.18L160.63,411.32ZM159.19,409.95L161.63,410.38L161.63,411.38L159.19,410.95ZM157.85,409.24L160.19,410.25L160.19,411.25L157.85,410.24ZM156.68,408.21L158.85,409.83L158.85,410.83L156.68,409.21ZM156.32,407.46L158.1,409.58L157.1,409.58L155.32,407.46ZM155.83,406.15L156.99,408.46L155.99,408.46L154.83,406.15ZM155.62,404.73L156.2,407.15L155.2,407.15L154.62,404.73ZM155.74,403.27L155.74,405.73L154.74,405.73L154.74,403.27ZM156.2,401.85L155.62,404.27L154.62,404.27L155.2,401.85ZM156.99,400.54L155.83,402.85L154.83,402.85L155.99,400.54ZM158.1,399.42L156.32,401.54L155.32,401.54L157.1,399.42ZM156.68,399.79L158.85,398.17L158.85,399.17L156.68,400.79ZM157.85,398.76L160.19,397.75L160.19,398.75L157.85,399.76ZM159.19,398.05L161.63,397.62L161.63,398.62L159.19,399.05ZM160.63,397.68L163.09,397.82L163.09,398.82L160.63,398.68ZM162.09,397.65L164.5,398.36L164.5,399.36L162.09,398.65ZM163.5,397.93L165.76,399.24L165.76,400.24L163.5,398.93ZM164.76,398.47L166.83,400.42L166.83,401.42L164.76,399.47ZM166.5,399.95L167.96,402.17L166.96,402.17L165.5,399.95ZM167.45,401.17L168.31,403.55L167.31,403.55L166.45,401.17ZM168.07,402.55L168.36,405L167.36,405L167.07,402.55Z"/>
<path fill="#fff" stroke="none" d="M167.27,404L166.92,406.47L165.92,406.47L166.27,404ZM167.22,405.47L166.15,407.81L165.15,407.81L166.22,405.47ZM166.81,406.81L164.97,408.93L163.97,408.93L165.81,406.81ZM163.16,409.05L165.41,407.61L165.41,408.61L163.16,410.05ZM161.74,409.29L164.16,408.58L164.16,409.58L161.74,410.29ZM160.26,409.15L162.74,409.15L162.74,410.15L160.26,410.15ZM158.84,408.58L161.26,409.29L161.26,410.29L158.84,409.58ZM157.59,407.61L159.84,409.05L159.84,410.05L157.59,408.61ZM157.19,406.81L159.03,408.93L158.03,408.93L156.19,406.81ZM156.78,405.47L157.85,407.81L156.85,407.81L155.78,405.47ZM156.73,404L157.08,406.47L156.08,406.47L155.73,404ZM157.08,402.53L156.73,405L155.73,405L156.08,402.53ZM157.85,401.19L156.78,403.53L155.78,403.53L156.85,401.19ZM159.03,400.07L157.19,402.19L156.19,402.19L158.03,400.07ZM157.59,400.39L159.84,398.95L159.84,399.95L157.59,401.39ZM158.84,399.42L161.26,398.71L161.26,399.71L158.84,400.42ZM160.26,398.85L162.74,398.85L162.74,399.85L160.26,399.85ZM161.74,398.71L164.16,399.42L164.16,400.42L161.74,399.71ZM163.16,398.95L165.41,400.39L165.41,401.39L163.16,399.95ZM164.97,400.07L166.81,402.19L165.81,402.19L163.97,400.07ZM166.15,401.19L167.22,403.53L166.22,403.53L165.15,401.19ZM166.92,402.53L167.27,405L166.27,405L165.92,402.53Z"/>
<path fill="#fff" stroke="none" d="M164.73,404L164.12,406.3L163.12,406.3L163.73,404ZM162.3,406.75L164.25,404.8L164.25,405.8L162.3,407.75ZM161,406.73L163.3,406.12L163.3,407.12L161,407.73ZM159.7,406.12L162,406.73L162,407.73L159.7,407.12ZM158.75,404.8L160.7,406.75L160.7,407.75L158.75,405.8ZM159.27,404L159.88,406.3L158.88,406.3L158.27,404ZM159.88,402.7L159.27,405L158.27,405L158.88,402.7ZM158.75,403.2L160.7,401.25L160.7,402.25L158.75,404.2ZM159.7,401.88L162,401.27L162,402.27L159.7,402.88ZM161,401.27L163.3,401.88L163.3,402.88L161,402.27ZM162.3,401.25L164.25,403.2L164.25,404.2L162.3,402.25ZM164.12,402.7L164.73,405L163.73,405L163.12,402.7Z"/>
<path fill="#fff" stroke="none" d="M223.36,421L223.07,423.45L222.07,423.45L222.36,421ZM223.31,422.45L222.45,424.83L221.45,424.83L222.31,422.45ZM222.96,423.83L221.5,426.05L220.5,426.05L221.96,423.83ZM219.76,426.53L221.83,424.58L221.83,425.58L219.76,427.53ZM218.5,427.07L220.76,425.76L220.76,426.76L218.5,428.07ZM217.09,427.35L219.5,426.64L219.5,427.64L217.09,428.35ZM215.63,427.32L218.09,427.18L218.09,428.18L215.63,428.32ZM214.19,426.95L216.63,427.38L216.63,428.38L214.19,427.95ZM212.85,426.24L215.19,427.25L215.19,428.25L212.85,427.24ZM211.68,425.21L213.85,426.83L213.85,427.83L211.68,426.21ZM211.32,424.46L213.1,426.58L212.1,426.58L210.32,424.46ZM210.83,423.15L211.99,425.46L210.99,425.46L209.83,423.15ZM210.62,421.73L211.2,424.15L210.2,424.15L209.62,421.73ZM210.74,420.27L210.74,422.73L209.74,422.73L209.74,420.27ZM211.2,418.85L210.62,421.27L209.62,421.27L210.2,418.85ZM211.99,417.54L210.83,419.85L209.83,419.85L210.99,417.54ZM213.1,416.42L211.32,418.54L210.32,418.54L212.1,416.42ZM211.68,416.79L213.85,415.17L213.85,416.17L211.68,417.79ZM212.85,415.76L215.19,414.75L215.19,415.75L212.85,416.76ZM214.19,415.05L216.63,414.62L216.63,415.62L214.19,416.05ZM215.63,414.68L218.09,414.82L218.09,415.82L215.63,415.68ZM217.09,414.65L219.5,415.36L219.5,416.36L217.09,415.65ZM218.5,414.93L220.76,416.24L220.76,417.24L218.5,415.93ZM219.76,415.47L221.83,417.42L221.83,418.42L219.76,416.47ZM221.5,416.95L222.96,419.17L221.96,419.17L220.5,416.95ZM222.45,418.17L223.31,420.55L222.31,420.55L221.45,418.17ZM223.07,419.55L223.36,422L222.36,422L222.07,419.55Z"/>
<path fill="#fff" stroke="none" d="M222.27,421L221.92,423.47L220.92,423.47L221.27,421ZM222.22,422.47L221.15,424.81L220.15,424.81L221.22,422.47ZM221.81,423.81L219.97,425.93L218.97,425.93L220.81,423.81ZM218.16,426.05L220.41,424.61L220.41,425.61L218.16,427.05ZM216.74,426.29L219.16,425.58L219.16,426.58L216.74,427.29ZM215.26,426.15L217.74,426.15L217.74,427.15L215.26,427.15ZM213.84,425.58L216.26,426.29L216.26,427.29L213.84,426.58ZM212.59,424.61L214.84,426.05L214.84,427.05L212.59,425.61ZM212.19,423.81L214.03,425.93L213.03,425.93L211.19,423.81ZM211.78,422.47L212.85,424.81L211.85,424.81L210.78,422.47ZM211.73,421L212.08,423.47L211.08,423.47L210.73,421ZM212.08,419.53L211.73,422L210.73,422L211.08,419.53ZM212.85,418.19L211.78,420.53L210.78,420.53L211.85,418.19ZM214.03,417.07L212.19,419.19L211.19,419.19L213.03,417.07ZM212.59,417.39L214.84,415.95L214.84,416.95L212.59,418.39ZM213.84,416.42L216.26,415.71L216.26,416.71L213.84,417.42ZM215.26,415.85L217.74,415.85L217.74,416.85L215.26,416.85ZM216.74,415.71L219.16,416.42L219.16,417.42L216.74,416.71ZM218.16,415.95L220.41,417.39L220.41,418.39L218.16,416.95ZM219.97,417.07L221.81,419.19L220.81,419.19L218.97,417.07ZM221.15,418.19L222.22,420.53L221.22,420.53L220.15,418.19ZM221.92,419.53L222.27,422L221.27,422L220.92,419.53Z"/>
<path fill="#fff" stroke="none" d="M219.73,421L219.12,423.3L218.12,423.3L218.73,421ZM217.3,423.75L219.25,421.8L219.25,422.8L217.3,424.75ZM216,423.73L218.3,423.12L218.3,424.12L216,424.73ZM214.7,423.12L217,423.73L217,424.73L214.7,424.12ZM213.75,421.8L215.7,423.75L215.7,424.75L213.75,422.8ZM214.27,421L214.88,423.3L213.88,423.3L213.27,421ZM214.88,419.7L214.27,422L213.27,422L213.88,419.7ZM213.75,420.2L215.7,418.25L215.7,419.25L213.75,421.2ZM214.7,418.88L217,418.27L217,419.27L214.7,419.88ZM216,418.27L218.3,418.88L218.3,419.88L216,419.27ZM217.3,418.25L219.25,420.2L219.25,421.2L217.3,419.25ZM219.12,419.7L219.73,422L218.73,422L218.12,419.7Z"/>
<path fill="#fff" stroke="none" d="M161,417.2L164.5,419.3L164.5,420.3L161,418.2ZM164.38,419L165.12,422L164.12,422L163.38,419ZM165.43,421L161.57,425.5L160.57,425.5L164.43,421ZM158.57,421L162.43,425.5L161.43,425.5L157.57,421ZM159.62,419L158.88,422L157.88,422L158.62,419ZM158.5,419.3L162,417.2L162,418.2L158.5,420.3Z"/>
<path fill="#fff" stroke="none" d="M220.81,404L219.34,407.55L218.34,407.55L219.81,404ZM216,407.81L219.55,406.34L219.55,407.34L216,408.81ZM213.45,406.34L217,407.81L217,408.81L213.45,407.34ZM213.19,404L214.66,407.55L213.66,407.55L212.19,404ZM214.66,401.45L213.19,405L212.19,405L213.66,401.45ZM213.45,401.66L217,400.19L217,401.19L213.45,402.66ZM216,400.19L219.55,401.66L219.55,402.66L216,401.19ZM219.34,401.45L220.81,405L219.81,405L218.34,401.45Z"/>
<path fill="#fff" stroke="none" d="M170.98,456.9L171.94,458.8L170.94,458.8L169.98,456.9ZM170.68,455.97L171.42,457.9L170.42,457.9L169.68,455.97ZM170.48,455L171,456.97L170,456.97L169.48,455ZM170.37,454L170.69,456L169.69,456L169.37,454ZM170.37,453L170.48,455L169.48,455L169.37,453ZM170.48,452L170.37,454L169.37,454L169.48,452ZM170.69,451L170.37,453L169.37,453L169.69,451ZM171,450.03L170.48,452L169.48,452L170,450.03ZM171.42,449.1L170.68,451.03L169.68,451.03L170.42,449.1ZM171.94,448.2L170.98,450.1L169.98,450.1L170.94,448.2ZM172.56,447.36L171.36,449.2L170.36,449.2L171.56,447.36ZM173.27,446.58L171.83,448.36L170.83,448.36L172.27,446.58ZM171.87,447.08L173.58,445.37L173.58,446.37L171.87,448.08ZM172.58,446.27L174.36,444.83L174.36,445.83L172.58,447.27ZM173.36,445.56L175.2,444.36L175.2,445.36L173.36,446.56ZM174.2,444.94L176.1,443.98L176.1,444.98L174.2,445.94ZM175.1,444.42L177.03,443.68L177.03,444.68L175.1,445.42ZM176.03,444L178,443.48L178,444.48L176.03,445ZM177,443.69L179,443.37L179,444.37L177,444.69ZM178,443.48L180,443.37L180,444.37L178,444.48ZM179,443.37L181,443.48L181,444.48L179,444.37ZM180,443.37L182,443.69L182,444.69L180,444.37ZM181,443.48L182.97,444L182.97,445L181,444.48ZM181.97,443.68L183.9,444.42L183.9,445.42L181.97,444.68ZM182.9,443.98L184.8,444.94L184.8,445.94L182.9,444.98ZM183.8,444.36L185.64,445.56L185.64,446.56L183.8,445.36ZM184.64,444.83L186.42,446.27L186.42,447.27L184.64,445.83ZM185.42,445.37L187.13,447.08L187.13,448.08L185.42,446.37ZM186.73,446.58L188.17,448.36L187.17,448.36L185.73,446.58ZM187.44,447.36L188.64,449.2L187.64,449.2L186.44,447.36ZM188.06,448.2L189.02,450.1L188.02,450.1L187.06,448.2ZM188.58,449.1L189.32,451.03L188.32,451.03L187.58,449.1ZM189,450.03L189.52,452L188.52,452L188,450.03ZM189.31,451L189.63,453L188.63,453L188.31,451ZM189.52,452L189.63,454L188.63,454L188.52,452ZM189.63,453L189.52,455L188.52,455L188.63,453ZM189.63,454L189.31,456L188.31,456L188.63,454ZM189.52,455L189,456.97L188,456.97L188.52,455ZM189.32,455.97L188.58,457.9L187.58,457.9L188.32,455.97ZM189.02,456.9L188.06,458.8L187.06,458.8L188.02,456.9Z"/>
<path fill="#fff" stroke="none" d="M170.7,457.31L175.5,461.99L175.5,462.99L170.7,458.31Z"/>
<path fill="#fff" stroke="none" d="M183.5,461.99L188.3,457.31L188.3,458.31L183.5,462.99Z"/>
<path fill="#fff" stroke="none" d="M186.56,453L186.28,455.45L185.28,455.45L185.56,453ZM186.51,454.45L185.68,456.82L184.68,456.82L185.51,454.45ZM186.17,455.82L184.77,458.05L183.77,458.05L185.17,455.82ZM183.05,458.58L185.08,456.55L185.08,457.55L183.05,459.58ZM181.82,459.17L184.05,457.77L184.05,458.77L181.82,460.17ZM180.45,459.51L182.82,458.68L182.82,459.68L180.45,460.51ZM179,459.56L181.45,459.28L181.45,460.28L179,460.56ZM177.55,459.28L180,459.56L180,460.56L177.55,460.28ZM176.18,458.68L178.55,459.51L178.55,460.51L176.18,459.68ZM174.95,457.77L177.18,459.17L177.18,460.17L174.95,458.77ZM173.92,456.55L175.95,458.58L175.95,459.58L173.92,457.55ZM173.83,455.82L175.23,458.05L174.23,458.05L172.83,455.82ZM173.49,454.45L174.32,456.82L173.32,456.82L172.49,454.45ZM173.44,453L173.72,455.45L172.72,455.45L172.44,453ZM173.72,451.55L173.44,454L172.44,454L172.72,451.55ZM174.32,450.18L173.49,452.55L172.49,452.55L173.32,450.18ZM175.23,448.95L173.83,451.18L172.83,451.18L174.23,448.95ZM173.92,449.45L175.95,447.42L175.95,448.42L173.92,450.45ZM174.95,448.23L177.18,446.83L177.18,447.83L174.95,449.23ZM176.18,447.32L178.55,446.49L178.55,447.49L176.18,448.32ZM177.55,446.72L180,446.44L180,447.44L177.55,447.72ZM179,446.44L181.45,446.72L181.45,447.72L179,447.44ZM180.45,446.49L182.82,447.32L182.82,448.32L180.45,447.49ZM181.82,446.83L184.05,448.23L184.05,449.23L181.82,447.83ZM183.05,447.42L185.08,449.45L185.08,450.45L183.05,448.42ZM184.77,448.95L186.17,451.18L185.17,451.18L183.77,448.95ZM185.68,450.18L186.51,452.55L185.51,452.55L184.68,450.18ZM186.28,451.55L186.56,454L185.56,454L185.28,451.55Z"/>
<path fill="#fff" stroke="none" d="M182.73,453L182.12,455.3L181.12,455.3L181.73,453ZM180.3,455.75L182.25,453.8L182.25,454.8L180.3,456.75ZM179,455.73L181.3,455.12L181.3,456.12L179,456.73ZM177.7,455.12L180,455.73L180,456.73L177.7,456.12ZM176.75,453.8L178.7,455.75L178.7,456.75L176.75,454.8ZM177.27,453L177.88,455.3L176.88,455.3L176.27,453ZM177.88,451.7L177.27,454L176.27,454L176.88,451.7ZM176.75,452.2L178.7,450.25L178.7,451.25L176.75,453.2ZM177.7,450.88L180,450.27L180,451.27L177.7,451.88ZM179,450.27L181.3,450.88L181.3,451.88L179,451.27ZM180.3,450.25L182.25,452.2L182.25,453.2L180.3,451.25ZM182.12,451.7L182.73,454L181.73,454L181.12,451.7Z"/>
<path fill="#fff" stroke="none" d="M188.45,468L188.22,470.5L187.22,470.5L187.45,468ZM188.4,469.5L187.73,471.95L186.73,471.95L187.4,469.5ZM188.11,470.95L186.97,473.31L185.97,473.31L187.11,470.95ZM187.57,472.31L185.96,474.53L184.96,474.53L186.57,472.31ZM184.24,475.05L186.33,473.05L186.33,474.05L184.24,476.05ZM182.98,475.73L185.24,474.24L185.24,475.24L182.98,476.73ZM181.6,476.2L183.98,475.18L183.98,476.18L181.6,477.2ZM180.13,476.44L182.6,475.87L182.6,476.87L180.13,477.44ZM178.62,476.41L181.13,476.3L181.13,477.3L178.62,477.41ZM177.13,476.12L179.62,476.46L179.62,477.46L177.13,477.12ZM175.7,475.56L178.13,476.35L178.13,477.35L175.7,476.56ZM174.37,474.74L176.7,475.99L176.7,476.99L174.37,475.74ZM173.2,473.67L175.37,475.41L175.37,476.41L173.2,474.67ZM172.77,472.94L174.63,475.07L173.63,475.07L171.77,472.94ZM172.13,471.64L173.5,473.94L172.5,473.94L171.13,471.64ZM171.72,470.23L172.62,472.64L171.62,472.64L170.72,470.23ZM171.54,468.75L171.99,471.23L170.99,471.23L170.54,468.75ZM171.63,467.25L171.63,469.75L170.63,469.75L170.63,467.25ZM171.99,465.77L171.54,468.25L170.54,468.25L170.99,465.77ZM172.62,464.36L171.72,466.77L170.72,466.77L171.62,464.36ZM173.5,463.06L172.13,465.36L171.13,465.36L172.5,463.06ZM174.63,461.93L172.77,464.06L171.77,464.06L173.63,461.93ZM173.2,462.33L175.37,460.59L175.37,461.59L173.2,463.33ZM174.37,461.26L176.7,460.01L176.7,461.01L174.37,462.26ZM175.7,460.44L178.13,459.65L178.13,460.65L175.7,461.44ZM177.13,459.88L179.62,459.54L179.62,460.54L177.13,460.88ZM178.62,459.59L181.13,459.7L181.13,460.7L178.62,460.59ZM180.13,459.56L182.6,460.13L182.6,461.13L180.13,460.56ZM181.6,459.8L183.98,460.82L183.98,461.82L181.6,460.8ZM182.98,460.27L185.24,461.76L185.24,462.76L182.98,461.27ZM184.24,460.95L186.33,462.95L186.33,463.95L184.24,461.95ZM185.96,462.47L187.57,464.69L186.57,464.69L184.96,462.47ZM186.97,463.69L188.11,466.05L187.11,466.05L185.97,463.69ZM187.73,465.05L188.4,467.5L187.4,467.5L186.73,465.05ZM188.22,466.5L188.45,469L187.45,469L187.22,466.5Z"/>
<path fill="#fff" stroke="none" d="M186.05,461.3L174.35,474.3L173.35,474.3L185.05,461.3Z"/>
<path fill="#fff" stroke="none" d="M195.98,456.9L196.94,458.8L195.94,458.8L194.98,456.9ZM195.68,455.97L196.42,457.9L195.42,457.9L194.68,455.97ZM195.48,455L196,456.97L195,456.97L194.48,455ZM195.37,454L195.69,456L194.69,456L194.37,454ZM195.37,453L195.48,455L194.48,455L194.37,453ZM195.48,452L195.37,454L194.37,454L194.48,452ZM195.69,451L195.37,453L194.37,453L194.69,451ZM196,450.03L195.48,452L194.48,452L195,450.03ZM196.42,449.1L195.68,451.03L194.68,451.03L195.42,449.1ZM196.94,448.2L195.98,450.1L194.98,450.1L195.94,448.2ZM197.56,447.36L196.36,449.2L195.36,449.2L196.56,447.36ZM198.27,446.58L196.83,448.36L195.83,448.36L197.27,446.58ZM196.87,447.08L198.58,445.37L198.58,446.37L196.87,448.08ZM197.58,446.27L199.36,444.83L199.36,445.83L197.58,447.27ZM198.36,445.56L200.2,444.36L200.2,445.36L198.36,446.56ZM199.2,444.94L201.1,443.98L201.1,444.98L199.2,445.94ZM200.1,444.42L202.03,443.68L202.03,444.68L200.1,445.42ZM201.03,444L203,443.48L203,444.48L201.03,445ZM202,443.69L204,443.37L204,444.37L202,444.69ZM203,443.48L205,443.37L205,444.37L203,444.48ZM204,443.37L206,443.48L206,444.48L204,444.37ZM205,443.37L207,443.69L207,444.69L205,444.37ZM206,443.48L207.97,444L207.97,445L206,444.48ZM206.97,443.68L208.9,444.42L208.9,445.42L206.97,444.68ZM207.9,443.98L209.8,444.94L209.8,445.94L207.9,444.98ZM208.8,444.36L210.64,445.56L210.64,446.56L208.8,445.36ZM209.64,444.83L211.42,446.27L211.42,447.27L209.64,445.83ZM210.42,445.37L212.13,447.08L212.13,448.08L210.42,446.37ZM211.73,446.58L213.17,448.36L212.17,448.36L210.73,446.58ZM212.44,447.36L213.64,449.2L212.64,449.2L211.44,447.36ZM213.06,448.2L214.02,450.1L213.02,450.1L212.06,448.2ZM213.58,449.1L214.32,451.03L213.32,451.03L212.58,449.1ZM214,450.03L214.52,452L213.52,452L213,450.03ZM214.31,451L214.63,453L213.63,453L213.31,451ZM214.52,452L214.63,454L213.63,454L213.52,452ZM214.63,453L214.52,455L213.52,455L213.63,453ZM214.63,454L214.31,456L213.31,456L213.63,454ZM214.52,455L214,456.97L213,456.97L213.52,455ZM214.32,455.97L213.58,457.9L212.58,457.9L213.32,455.97ZM214.02,456.9L213.06,458.8L212.06,458.8L213.02,456.9Z"/>
<path fill="#fff" stroke="none" d="M195.7,457.31L200.5,461.99L200.5,462.99L195.7,458.31Z"/>
<path fill="#fff" stroke="none" d="M208.5,461.99L213.3,457.31L213.3,458.31L208.5,462.99Z"/>
<path fill="#fff" stroke="none" d="M211.56,453L211.28,455.45L210.28,455.45L210.56,453ZM211.51,454.45L210.68,456.82L209.68,456.82L210.51,454.45ZM211.17,455.82L209.77,458.05L208.77,458.05L210.17,455.82ZM208.05,458.58L210.08,456.55L210.08,457.55L208.05,459.58ZM206.82,459.17L209.05,457.77L209.05,458.77L206.82,460.17ZM205.45,459.51L207.82,458.68L207.82,459.68L205.45,460.51ZM204,459.56L206.45,459.28L206.45,460.28L204,460.56ZM202.55,459.28L205,459.56L205,460.56L202.55,460.28ZM201.18,458.68L203.55,459.51L203.55,460.51L201.18,459.68ZM199.95,457.77L202.18,459.17L202.18,460.17L199.95,458.77ZM198.92,456.55L200.95,458.58L200.95,459.58L198.92,457.55ZM198.83,455.82L200.23,458.05L199.23,458.05L197.83,455.82ZM198.49,454.45L199.32,456.82L198.32,456.82L197.49,454.45ZM198.44,453L198.72,455.45L197.72,455.45L197.44,453ZM198.72,451.55L198.44,454L197.44,454L197.72,451.55ZM199.32,450.18L198.49,452.55L197.49,452.55L198.32,450.18ZM200.23,448.95L198.83,451.18L197.83,451.18L199.23,448.95ZM198.92,449.45L200.95,447.42L200.95,448.42L198.92,450.45ZM199.95,448.23L202.18,446.83L202.18,447.83L199.95,449.23ZM201.18,447.32L203.55,446.49L203.55,447.49L201.18,448.32ZM202.55,446.72L205,446.44L205,447.44L202.55,447.72ZM204,446.44L206.45,446.72L206.45,447.72L204,447.44ZM205.45,446.49L207.82,447.32L207.82,448.32L205.45,447.49ZM206.82,446.83L209.05,448.23L209.05,449.23L206.82,447.83ZM208.05,447.42L210.08,449.45L210.08,450.45L208.05,448.42ZM209.77,448.95L211.17,451.18L210.17,451.18L208.77,448.95ZM210.68,450.18L211.51,452.55L210.51,452.55L209.68,450.18ZM211.28,451.55L211.56,454L210.56,454L210.28,451.55Z"/>
<path fill="#fff" stroke="none" d="M207.73,453L207.12,455.3L206.12,455.3L206.73,453ZM205.3,455.75L207.25,453.8L207.25,454.8L205.3,456.75ZM204,455.73L206.3,455.12L206.3,456.12L204,456.73ZM202.7,455.12L205,455.73L205,456.73L202.7,456.12ZM201.75,453.8L203.7,455.75L203.7,456.75L201.75,454.8ZM202.27,453L202.88,455.3L201.88,455.3L201.27,453ZM202.88,451.7L202.27,454L201.27,454L201.88,451.7ZM201.75,452.2L203.7,450.25L203.7,451.25L201.75,453.2ZM202.7,450.88L205,450.27L205,451.27L202.7,451.88ZM204,450.27L206.3,450.88L206.3,451.88L204,451.27ZM205.3,450.25L207.25,452.2L207.25,453.2L205.3,451.25ZM207.12,451.7L207.73,454L206.73,454L206.12,451.7Z"/>
<path fill="#fff" stroke="none" d="M213.45,468L213.22,470.5L212.22,470.5L212.45,468ZM213.4,469.5L212.73,471.95L211.73,471.95L212.4,469.5ZM213.11,470.95L211.97,473.31L210.97,473.31L212.11,470.95ZM212.57,472.31L210.96,474.53L209.96,474.53L211.57,472.31ZM209.24,475.05L211.33,473.05L211.33,474.05L209.24,476.05ZM207.98,475.73L210.24,474.24L210.24,475.24L207.98,476.73ZM206.6,476.2L208.98,475.18L208.98,476.18L206.6,477.2ZM205.13,476.44L207.6,475.87L207.6,476.87L205.13,477.44ZM203.62,476.41L206.13,476.3L206.13,477.3L203.62,477.41ZM202.13,476.12L204.62,476.46L204.62,477.46L202.13,477.12ZM200.7,475.56L203.13,476.35L203.13,477.35L200.7,476.56ZM199.37,474.74L201.7,475.99L201.7,476.99L199.37,475.74ZM198.2,473.67L200.37,475.41L200.37,476.41L198.2,474.67ZM197.77,472.94L199.63,475.07L198.63,475.07L196.77,472.94ZM197.13,471.64L198.5,473.94L197.5,473.94L196.13,471.64ZM196.72,470.23L197.62,472.64L196.62,472.64L195.72,470.23ZM196.54,468.75L196.99,471.23L195.99,471.23L195.54,468.75ZM196.63,467.25L196.63,469.75L195.63,469.75L195.63,467.25ZM196.99,465.77L196.54,468.25L195.54,468.25L195.99,465.77ZM197.62,464.36L196.72,466.77L195.72,466.77L196.62,464.36ZM198.5,463.06L197.13,465.36L196.13,465.36L197.5,463.06ZM199.63,461.93L197.77,464.06L196.77,464.06L198.63,461.93ZM198.2,462.33L200.37,460.59L200.37,461.59L198.2,463.33ZM199.37,461.26L201.7,460.01L201.7,461.01L199.37,462.26ZM200.7,460.44L203.13,459.65L203.13,460.65L200.7,461.44ZM202.13,459.88L204.62,459.54L204.62,460.54L202.13,460.88ZM203.62,459.59L206.13,459.7L206.13,460.7L203.62,460.59ZM205.13,459.56L207.6,460.13L207.6,461.13L205.13,460.56ZM206.6,459.8L208.98,460.82L208.98,461.82L206.6,460.8ZM207.98,460.27L210.24,461.76L210.24,462.76L207.98,461.27ZM209.24,460.95L211.33,462.95L211.33,463.95L209.24,461.95ZM210.96,462.47L212.57,464.69L211.57,464.69L209.96,462.47ZM211.97,463.69L213.11,466.05L212.11,466.05L210.97,463.69ZM212.73,465.05L213.4,467.5L212.4,467.5L211.73,465.05ZM213.22,466.5L213.45,469L212.45,469L212.22,466.5Z"/>
<path fill="#fff" stroke="none" d="M211.05,461.3L199.35,474.3L198.35,474.3L210.05,461.3Z"/>
<path fill="#fff" stroke="none" d="M212.85,462.5L201.35,475.3L200.35,475.3L211.85,462.5Z"/>
<line x1="146.5" y1="414.5" x2="239.5" y2="414.5" stroke="#f0f" stroke-dasharray="3.8 3.8" stroke-dashoffset="1"/>
<line x1="146.5" y1="429.5" x2="239.5" y2="429.5" stroke="#f0f" stroke-dasharray="3.8 3.8" stroke-dashoffset="1"/>
<line x1="186.5" y1="414.5" x2="186.5" y2="395.5" stroke="#f0f" stroke-dasharray="3.8 3.8"/>
<line x1="196.5" y1="414.5" x2="196.5" y2="395.5" stroke="#f0f" stroke-dasharray="3.8 3.8"/>
<line x1="179.5" y1="429.5" x2="179.5" y2="434.5" stroke="#f0f"/>
<line x1="203.5" y1="396.5" x2="211" y2="396.5" stroke="#f0f"/>
<line x1="213" y1="396.5" x2="219.5" y2="396.5" stroke="#f0f"/>
<line x1="222" y1="396.5" x2="229.6" y2="396.5" stroke="#f0f"/>
<line x1="203.5" y1="396.5" x2="203.5" y2="401" stroke="#f0f"/>
<line x1="203.5" y1="405" x2="203.5" y2="408.5" stroke="#f0f"/>
<line x1="210.5" y1="396.5" x2="210.5" y2="401" stroke="#f0f"/>
<line x1="210.5" y1="405" x2="210.5" y2="408.5" stroke="#f0f"/>
<line x1="223.5" y1="396.5" x2="223.5" y2="401" stroke="#f0f"/>
<line x1="223.5" y1="405" x2="223.5" y2="408.5" stroke="#f0f"/>
<line x1="229.5" y1="396.5" x2="229.5" y2="401" stroke="#f0f"/>
<line x1="229.5" y1="405" x2="229.5" y2="408.5" stroke="#f0f"/>
<line x1="201.5" y1="408.5" x2="205.6" y2="408.5" stroke="#f0f"/>
<line x1="206.7" y1="408.5" x2="213.6" y2="408.5" stroke="#f0f"/>
<line x1="219.5" y1="408.5" x2="227.5" y2="408.5" stroke="#f0f"/>
<line x1="228" y1="408.5" x2="232" y2="408.5" stroke="#f0f"/>
<line x1="201.5" y1="408.5" x2="201.5" y2="414" stroke="#f0f"/>
<line x1="231.5" y1="408.5" x2="231.5" y2="414" stroke="#f0f"/>
<line x1="208.5" y1="408.5" x2="208.5" y2="412.5" stroke="#f0f"/>
<line x1="224.5" y1="408.5" x2="224.5" y2="412.5" stroke="#f0f"/>
<line x1="207" y1="412.5" x2="210.7" y2="412.5" stroke="#f0f"/>
<line x1="215" y1="412.5" x2="217.5" y2="412.5" stroke="#f0f"/>
<line x1="222.2" y1="412.5" x2="225.7" y2="412.5" stroke="#f0f"/>
<line x1="201.5" y1="412.5" x2="203" y2="412.5" stroke="#f0f"/>
<line x1="230" y1="412.5" x2="231.5" y2="412.5" stroke="#f0f"/>
<line x1="191.5" y1="472.5" x2="191.5" y2="482.5" stroke="#f0f" stroke-dasharray="4 2"/>
<line x1="191.5" y1="482.5" x2="241.5" y2="482.5" stroke="#f0f" stroke-dasharray="3.8 3.8"/>
<line x1="225.5" y1="472.5" x2="225.5" y2="482.5" stroke="#f0f" stroke-dasharray="4 2"/>
<line x1="241.5" y1="473.5" x2="241.5" y2="482.5" stroke="#f0f" stroke-dasharray="4 2"/>
<line x1="203.5" y1="482.5" x2="229.5" y2="482.5" stroke="#fff"/>
<line x1="209" y1="485.5" x2="210.5" y2="485.5" stroke="#fff"/>
<line x1="223.5" y1="485.5" x2="225" y2="485.5" stroke="#fff"/>
<polyline points="166.5,472.5 166.5,434.5 180,434.5" stroke="#ff0"/>
<line x1="180" y1="434.5" x2="239.5" y2="434.5" stroke="#ff0"/>
<line x1="184.8" y1="434.5" x2="239.5" y2="434.5" stroke="#f0f" stroke-dasharray="3.8 3.6"/>
<line x1="253" y1="434.5" x2="276" y2="434.5" stroke="#ff0" stroke-dasharray="4 3.2"/>
<line x1="276" y1="434.5" x2="313" y2="434.5" stroke="#ff0"/>
<line x1="285.5" y1="434.5" x2="285.5" y2="472.5" stroke="#ff0"/>
<line x1="312.5" y1="434.5" x2="312.5" y2="472.5" stroke="#ff0"/>
<line x1="166.5" y1="472.5" x2="210" y2="472.5" stroke="#ff0"/>
<line x1="217" y1="472.5" x2="257.7" y2="472.5" stroke="#ff0"/>
<line x1="262" y1="472.5" x2="265.8" y2="472.5" stroke="#ff0"/>
<line x1="269.9" y1="472.5" x2="273" y2="472.5" stroke="#ff0"/>
<line x1="276.8" y1="472.5" x2="312.5" y2="472.5" stroke="#ff0"/>
<line x1="217" y1="462.5" x2="241" y2="462.5" stroke="#ff0"/>
<line x1="245" y1="462.5" x2="248.5" y2="462.5" stroke="#ff0"/>
<line x1="253" y1="462.5" x2="256" y2="462.5" stroke="#ff0"/>
<line x1="260" y1="462.5" x2="285.5" y2="462.5" stroke="#ff0"/>
<path clip-path="url(#h2)" d="M364,330.5L442,252.5L442,253.5L364,331.5ZM369,330.5L447,252.5L447,253.5L369,331.5ZM375,330.5L453,252.5L453,253.5L375,331.5ZM380,330.5L458,252.5L458,253.5L380,331.5ZM385,330.5L463,252.5L463,253.5L385,331.5ZM391,330.5L469,252.5L469,253.5L391,331.5ZM396,330.5L474,252.5L474,253.5L396,331.5ZM401,330.5L479,252.5L479,253.5L401,331.5ZM407,330.5L485,252.5L485,253.5L407,331.5ZM412,330.5L490,252.5L490,253.5L412,331.5ZM417,330.5L495,252.5L495,253.5L417,331.5ZM423,330.5L501,252.5L501,253.5L423,331.5ZM428,330.5L506,252.5L506,253.5L428,331.5ZM433,330.5L511,252.5L511,253.5L433,331.5ZM439,330.5L517,252.5L517,253.5L439,331.5ZM444,330.5L522,252.5L522,253.5L444,331.5ZM450,330.5L528,252.5L528,253.5L450,331.5ZM455,330.5L533,252.5L533,253.5L455,331.5ZM460,330.5L538,252.5L538,253.5L460,331.5ZM466,330.5L544,252.5L544,253.5L466,331.5ZM471,330.5L549,252.5L549,253.5L471,331.5ZM476,330.5L554,252.5L554,253.5L476,331.5ZM482,330.5L560,252.5L560,253.5L482,331.5ZM487,330.5L565,252.5L565,253.5L487,331.5ZM492,330.5L570,252.5L570,253.5L492,331.5ZM498,330.5L576,252.5L576,253.5L498,331.5ZM503,330.5L581,252.5L581,253.5L503,331.5ZM508,330.5L586,252.5L586,253.5L508,331.5ZM514,330.5L592,252.5L592,253.5L514,331.5ZM519,330.5L597,252.5L597,253.5L519,331.5ZM524,330.5L602,252.5L602,253.5L524,331.5ZM530,330.5L608,252.5L608,253.5L530,331.5ZM535,330.5L613,252.5L613,253.5L535,331.5ZM540,330.5L618,252.5L618,253.5L540,331.5ZM546,330.5L624,252.5L624,253.5L546,331.5ZM551,330.5L629,252.5L629,253.5L551,331.5ZM557,330.5L635,252.5L635,253.5L557,331.5ZM562,330.5L640,252.5L640,253.5L562,331.5ZM567,330.5L645,252.5L645,253.5L567,331.5ZM573,330.5L651,252.5L651,253.5L573,331.5ZM578,330.5L656,252.5L656,253.5L578,331.5ZM583,330.5L661,252.5L661,253.5L583,331.5ZM589,330.5L667,252.5L667,253.5L589,331.5ZM594,330.5L672,252.5L672,253.5L594,331.5ZM599,330.5L677,252.5L677,253.5L599,331.5Z" fill="#0ff" stroke="none"/>
<path clip-path="url(#h3)" d="M437,236.5L502.49,171.01L502.49,172.01L437,237.5ZM442,236.5L507.49,171.01L507.49,172.01L442,237.5ZM447,236.5L512.49,171.01L512.49,172.01L447,237.5ZM453,236.5L518.49,171.01L518.49,172.01L453,237.5ZM458,236.5L523.49,171.01L523.49,172.01L458,237.5ZM463,236.5L528.49,171.01L528.49,172.01L463,237.5ZM469,236.5L534.49,171.01L534.49,172.01L469,237.5ZM474,236.5L539.49,171.01L539.49,172.01L474,237.5ZM479,236.5L544.49,171.01L544.49,172.01L479,237.5ZM485,236.5L550.49,171.01L550.49,172.01L485,237.5ZM490,236.5L555.49,171.01L555.49,172.01L490,237.5ZM495,236.5L560.49,171.01L560.49,172.01L495,237.5ZM501,236.5L566.49,171.01L566.49,172.01L501,237.5ZM506,236.5L571.49,171.01L571.49,172.01L506,237.5ZM511,236.5L576.49,171.01L576.49,172.01L511,237.5ZM517,236.5L582.49,171.01L582.49,172.01L517,237.5Z" fill="#0ff" stroke="none"/>
<path clip-path="url(#h4)" d="M448,125.5L485.78,163.28L485.78,164.28L448,126.5ZM454,125.5L491.78,163.28L491.78,164.28L454,126.5ZM459,125.5L496.78,163.28L496.78,164.28L459,126.5ZM465,125.5L502.78,163.28L502.78,164.28L465,126.5ZM470,125.5L507.78,163.28L507.78,164.28L470,126.5ZM475,125.5L512.78,163.28L512.78,164.28L475,126.5ZM481,125.5L518.78,163.28L518.78,164.28L481,126.5ZM486,125.5L523.78,163.28L523.78,164.28L486,126.5ZM491,125.5L528.78,163.28L528.78,164.28L491,126.5ZM497,125.5L534.78,163.28L534.78,164.28L497,126.5ZM502,125.5L539.78,163.28L539.78,164.28L502,126.5ZM507,125.5L544.78,163.28L544.78,164.28L507,126.5ZM513,125.5L550.78,163.28L550.78,164.28L513,126.5Z" fill="#0ff" stroke="none"/>
<path clip-path="url(#h5)" d="M469,132.5L488,113.5L488,114.5L469,133.5ZM475,132.5L494,113.5L494,114.5L475,133.5ZM480,132.5L499,113.5L499,114.5L480,133.5ZM485,132.5L504,113.5L504,114.5L485,133.5ZM491,132.5L510,113.5L510,114.5L491,133.5ZM496,132.5L515,113.5L515,114.5L496,133.5ZM501,132.5L520,113.5L520,114.5L501,133.5ZM507,132.5L526,113.5L526,114.5L507,133.5ZM512,132.5L531,113.5L531,114.5L512,133.5Z" fill="#0ff" stroke="none"/>
<path clip-path="url(#h6)" d="M510,113.5L529,132.5L529,133.5L510,114.5ZM516,113.5L535,132.5L535,133.5L516,114.5ZM521,113.5L540,132.5L540,133.5L521,114.5ZM526,113.5L545,132.5L545,133.5L526,114.5ZM532,113.5L551,132.5L551,133.5L532,114.5ZM537,113.5L556,132.5L556,133.5L537,114.5ZM542,113.5L561,132.5L561,133.5L542,114.5ZM548,113.5L567,132.5L567,133.5L548,114.5ZM553,113.5L572,132.5L572,133.5L553,114.5ZM559,113.5L578,132.5L578,133.5L559,114.5ZM564,113.5L583,132.5L583,133.5L564,114.5Z" fill="#0ff" stroke="none"/>
<path clip-path="url(#h7)" d="M520,120.5L537,103.5L537,104.5L520,121.5ZM525,120.5L542,103.5L542,104.5L525,121.5ZM530,120.5L547,103.5L547,104.5L530,121.5ZM536,120.5L553,103.5L553,104.5L536,121.5ZM541,120.5L558,103.5L558,104.5L541,121.5Z" fill="#0ff" stroke="none"/>
<path clip-path="url(#h8)" d="M541,240.5L564,217.5L564,218.5L541,241.5ZM547,240.5L570,217.5L570,218.5L547,241.5ZM552,240.5L575,217.5L575,218.5L552,241.5ZM557,240.5L580,217.5L580,218.5L557,241.5ZM563,240.5L586,217.5L586,218.5L563,241.5Z" fill="#0ff" stroke="none"/>
<polyline points="498.5,308.5 436.5,308.5 436.5,327.5 604.5,327.5 604.5,308.5 517.5,308.5" stroke="#fff"/>
<line x1="498.5" y1="148.5" x2="498.5" y2="233.5" stroke="#fff"/>
<line x1="498.5" y1="256.5" x2="498.5" y2="308.5" stroke="#fff"/>
<polyline points="517.5,117.5 517.5,208.5 522.5,208.5 522.5,230.5" stroke="#fff"/>
<polyline points="522.5,261 522.5,283.5 517.5,283.5 517.5,308.5" stroke="#fff"/>
<polyline points="479.5,148.5 479.5,117.5 567.5,117.5 567.5,129.5 492.5,129.5" stroke="#fff"/>
<line x1="479.5" y1="129.5" x2="485.5" y2="129.5" stroke="#fff"/>
<line x1="479.5" y1="148.5" x2="498.5" y2="148.5" stroke="#fff"/>
<path fill="#fff" stroke="none" d="M515.1,155.6L518,153.67L518,154.67L515.1,156.6ZM513.2,156.87L516.1,154.94L516.1,155.94L513.2,157.87ZM511.3,157.87L514.2,156.25L514.2,157.25L511.3,158.87ZM509.4,158.67L512.3,157.37L512.3,158.37L509.4,159.67ZM507.5,159.26L510.4,158.27L510.4,159.27L507.5,160.26ZM505.6,159.64L508.5,158.97L508.5,159.97L505.6,160.64Z"/>
<polyline points="506.1,160.03 504.2,160.26 502.3,160.28 500.4,160.05" stroke="#fff"/>
<path fill="#fff" stroke="none" d="M498,158.98L500.9,159.66L500.9,160.66L498,159.98Z"/>
<line x1="498.5" y1="178.5" x2="498.5" y2="179.14" stroke="#fff"/>
<path fill="#fff" stroke="none" d="M498,178.96L500.9,177.11L500.9,178.11L498,179.96ZM499.9,177.69L502.8,176.17L502.8,177.17L499.9,178.69ZM501.8,176.64L504.7,175.43L504.7,176.43L501.8,177.64ZM503.7,175.79L506.6,174.9L506.6,175.9L503.7,176.79ZM505.6,175.16L508.5,174.58L508.5,175.58L505.6,176.16Z"/>
<polyline points="508,175.18 509.9,175.01 511.8,175.05 513.7,175.29" stroke="#fff"/>
<path fill="#fff" stroke="none" d="M513.2,174.67L516.1,175.37L516.1,176.37L513.2,175.67ZM515.1,175.07L518,176.08L518,177.08L515.1,176.07Z"/>
<line x1="485.5" y1="117.5" x2="485.5" y2="148.5" stroke="#fff"/>
<line x1="492.5" y1="117.5" x2="492.5" y2="148.5" stroke="#fff"/>
<line x1="485.5" y1="139.5" x2="492.5" y2="139.5" stroke="#fff"/>
<line x1="485.5" y1="140.5" x2="492.5" y2="140.5" stroke="#fff"/>
<polyline points="501.5,117.5 501.5,123.5 514,123.5 514,117.5" stroke="#fff"/>
<line x1="504.5" y1="123.5" x2="504.5" y2="146" stroke="#fff"/>
<path fill="#fff" stroke="none" d="M504,145L508,149L508,150L504,146ZM507,149L511,145L511,146L507,150Z"/>
<line x1="510.5" y1="146" x2="510.5" y2="123.5" stroke="#fff"/>
<line x1="504.5" y1="143.5" x2="510.5" y2="143.5" stroke="#fff"/>
<line x1="516" y1="117.5" x2="516" y2="123" stroke="#fff"/>
<polyline points="504,118.5 511,118.5 511,122.5 504,122.5 504,118.5" stroke="#f0f"/>
<line x1="506" y1="118.5" x2="506" y2="122.5" stroke="#f0f"/>
<line x1="509" y1="118.5" x2="509" y2="122.5" stroke="#f0f"/>
<path fill="#fff" stroke="none" d="M524.89,117L526.11,122.5L525.11,122.5L523.89,117ZM525.91,121.5L526.79,126.5L525.79,126.5L524.91,121.5ZM526.59,125.5L527.61,130L526.61,130L525.59,125.5Z"/>
<polyline points="531.5,117.5 531.5,107.5 546.5,107.5 546.5,117.5" stroke="#fff"/>
<line x1="537.5" y1="107.5" x2="537.5" y2="129.5" stroke="#fff"/>
<line x1="544" y1="107.5" x2="544" y2="129.5" stroke="#fff"/>
<polyline points="547.5,109 563.5,109 563.5,113.5 547.5,113.5 547.5,109" stroke="#fff"/>
<line x1="547.5" y1="110" x2="563.5" y2="110" stroke="#fff"/>
<line x1="547.5" y1="112.5" x2="563.5" y2="112.5" stroke="#fff"/>
<line x1="550.5" y1="113.5" x2="550.5" y2="117.5" stroke="#fff"/>
<line x1="560.5" y1="113.5" x2="560.5" y2="117.5" stroke="#fff"/>
<polyline points="552.5,117.5 552.5,128.5 558.5,128.5 558.5,117.5" stroke="#fff"/>
<line x1="552.5" y1="118.5" x2="558.5" y2="118.5" stroke="#fff"/>
<line x1="552.5" y1="127.5" x2="558.5" y2="127.5" stroke="#fff"/>
<path fill="#fff" stroke="none" d="M498.69,148.8L436.81,308.5L435.81,308.5L497.69,148.8Z"/>
<polyline points="472.5,238.5 479.5,238.5 479.5,253.5 472.5,253.5 472.5,238.5" stroke="#fff"/>
<polyline points="473.5,239.5 479.5,239.5 479.5,252.5 473.5,252.5 473.5,239.5" stroke="#fff"/>
<path fill="#fff" stroke="none" d="M479,234.5L481,232.5L481,233.5L479,235.5Z"/>
<polyline points="480.5,233.5 492.5,233.5 492.5,259.5 480.5,259.5" stroke="#fff"/>
<path fill="#fff" stroke="none" d="M479,257.5L481,259.5L481,260.5L479,258.5Z"/>
<line x1="479.5" y1="258.5" x2="479.5" y2="234.5" stroke="#fff"/>
<line x1="479.5" y1="239.5" x2="492.5" y2="239.5" stroke="#fff"/>
<line x1="479.5" y1="252.5" x2="492.5" y2="252.5" stroke="#fff"/>
<polyline points="492.5,231.5 495.5,231.5 495.5,261.5 492.5,261.5 492.5,231.5" stroke="#fff"/>
<polyline points="495.5,236.5 502.5,236.5 502.5,253.5 495.5,253.5 495.5,236.5" stroke="#fff"/>
<line x1="496.5" y1="238.5" x2="502.5" y2="238.5" stroke="#fff"/>
<line x1="496.5" y1="251.5" x2="502.5" y2="251.5" stroke="#fff"/>
<line x1="498.5" y1="233.5" x2="522.5" y2="233.5" stroke="#fff"/>
<line x1="498.5" y1="256.5" x2="522.5" y2="256.5" stroke="#fff"/>
<line x1="503.5" y1="238.5" x2="521.5" y2="238.5" stroke="#fff"/>
<line x1="503.5" y1="252.5" x2="521.5" y2="252.5" stroke="#fff"/>
<line x1="520.5" y1="233.5" x2="520.5" y2="256.5" stroke="#fff"/>
<line x1="523.5" y1="230.5" x2="551" y2="230.5" stroke="#fff"/>
<path fill="#fff" stroke="none" d="M550.5,229.5L554,233L554,234L550.5,230.5Z"/>
<line x1="553.5" y1="233" x2="553.5" y2="258.5" stroke="#fff"/>
<path fill="#fff" stroke="none" d="M550.5,261L554,257.5L554,258.5L550.5,262Z"/>
<line x1="551" y1="261" x2="523.5" y2="261" stroke="#fff"/>
<line x1="523.5" y1="230.5" x2="523.5" y2="261" stroke="#fff"/>
<line x1="524.5" y1="230.5" x2="524.5" y2="261" stroke="#fff"/>
<line x1="550" y1="231" x2="550" y2="261" stroke="#fff"/>
<polyline points="559.5,237.5 559.5,221.5 569.5,221.5 569.5,233.5" stroke="#fff"/>
<line x1="559.5" y1="237.5" x2="569.5" y2="237.5" stroke="#fff"/>
<polyline points="559.5,253 559.5,271.5 569.5,271.5 569.5,259.5" stroke="#fff"/>
<line x1="553.5" y1="238.5" x2="593" y2="238.5" stroke="#fff"/>
<line x1="553.5" y1="239.5" x2="593" y2="239.5" stroke="#fff"/>
<line x1="553.5" y1="252.5" x2="593" y2="252.5" stroke="#fff"/>
<line x1="553.5" y1="251.5" x2="593" y2="251.5" stroke="#fff"/>
<line x1="569.5" y1="233.5" x2="580.5" y2="233.5" stroke="#fff"/>
<path fill="#fff" stroke="none" d="M580,232.5L583,235.5L583,236.5L580,233.5Z"/>
<line x1="582.5" y1="235.5" x2="582.5" y2="257.5" stroke="#fff"/>
<path fill="#fff" stroke="none" d="M580,259.5L583,256.5L583,257.5L580,260.5Z"/>
<polyline points="580.5,259.5 569.5,259.5 569.5,233.5" stroke="#fff"/>
<line x1="582.5" y1="238.5" x2="591.5" y2="238.5" stroke="#fff"/>
<path fill="#fff" stroke="none" d="M591,237.5L594,240.5L594,241.5L591,238.5Z"/>
<line x1="593.5" y1="240.5" x2="593.5" y2="251" stroke="#fff"/>
<path fill="#fff" stroke="none" d="M591,253L594,250L594,251L591,254Z"/>
<line x1="591.5" y1="253" x2="582.5" y2="253" stroke="#fff"/>
<line x1="592.5" y1="240.5" x2="592.5" y2="251" stroke="#fff"/>
<line x1="436" y1="83.5" x2="448.3" y2="83.5" stroke="#fff"/>
<path fill="#fff" stroke="none" d="M448.34,83L480.96,118.7L479.96,118.7L447.34,83Z"/>
<line x1="482" y1="83.5" x2="494.7" y2="83.5" stroke="#fff"/>
<path fill="#fff" stroke="none" d="M495.02,83L507.48,117.5L506.48,117.5L494.02,83Z"/>
<line x1="515" y1="83.5" x2="527.6" y2="83.5" stroke="#fff"/>
<path fill="#fff" stroke="none" d="M527.87,83L536.43,101.3L535.43,101.3L526.87,83Z"/>
<line x1="539" y1="83.5" x2="551.6" y2="83.5" stroke="#fff"/>
<path fill="#fff" stroke="none" d="M551.96,83L559.74,110L558.74,110L550.96,83Z"/>
<line x1="436" y1="119.5" x2="448.7" y2="119.5" stroke="#fff"/>
<path fill="#fff" stroke="none" d="M448.2,118.56L564.7,220.64L564.7,221.64L448.2,119.56Z"/>
<line x1="436.2" y1="173.5" x2="448" y2="173.5" stroke="#fff"/>
<path fill="#fff" stroke="none" d="M447.5,172.57L516.5,232.33L516.5,233.33L447.5,173.57Z"/>
<line x1="435" y1="195.5" x2="448.5" y2="195.5" stroke="#fff"/>
<path fill="#fff" stroke="none" d="M448,194.6L493.5,231.1L493.5,232.1L448,195.6Z"/>
<line x1="435.8" y1="224.5" x2="447.6" y2="224.5" stroke="#fff"/>
<path fill="#fff" stroke="none" d="M447.1,223.56L486.7,258.74L486.7,259.74L447.1,224.56Z"/>
<line x1="522.5" y1="133.5" x2="522.5" y2="161.8" stroke="#ff0"/>
<line x1="522.5" y1="165.5" x2="522.5" y2="169.5" stroke="#ff0"/>
<line x1="522.5" y1="173.5" x2="522.5" y2="177" stroke="#ff0"/>
<line x1="522.5" y1="180.8" x2="522.5" y2="208.5" stroke="#ff0"/>
<line x1="559.5" y1="133.5" x2="559.5" y2="170.4" stroke="#ff0"/>
<line x1="559.5" y1="174.5" x2="559.5" y2="178" stroke="#ff0"/>
<line x1="559.5" y1="181.4" x2="559.5" y2="185.4" stroke="#ff0"/>
<line x1="559.5" y1="189.5" x2="559.5" y2="221.3" stroke="#ff0"/>
<line x1="559.5" y1="239.9" x2="559.5" y2="242" stroke="#ff0"/>
<line x1="559.5" y1="247.4" x2="559.5" y2="253" stroke="#ff0"/>
<line x1="559.5" y1="271.8" x2="559.5" y2="284.5" stroke="#ff0"/>
<line x1="522.5" y1="133.5" x2="559.5" y2="133.5" stroke="#ff0"/>
<line x1="522.5" y1="152.5" x2="559.5" y2="152.5" stroke="#ff0"/>
<line x1="551.5" y1="230.5" x2="559.5" y2="230.5" stroke="#ff0"/>
<line x1="522.5" y1="261.5" x2="559.5" y2="261.5" stroke="#ff0"/>
<line x1="522.5" y1="274.5" x2="559.5" y2="274.5" stroke="#ff0"/>
<line x1="522.5" y1="284.5" x2="559.5" y2="284.5" stroke="#ff0"/>
<line x1="489.5" y1="110.5" x2="489.5" y2="150.5" stroke="#f00"/>
<line x1="507.5" y1="110.5" x2="507.5" y2="157.5" stroke="#f00"/>
<line x1="540.5" y1="91" x2="540.5" y2="129" stroke="#f00"/>
<line x1="555.5" y1="107" x2="555.5" y2="130.5" stroke="#f00"/>
<line x1="446" y1="246.5" x2="499.8" y2="246.5" stroke="#f00"/>
<line x1="505" y1="246.5" x2="530.8" y2="246.5" stroke="#f00"/>
<line x1="542" y1="246.5" x2="613" y2="246.5" stroke="#f00"/>
<line x1="480" y1="110.5" x2="508" y2="110.5" stroke="#0f0"/>
<line x1="485.5" y1="110.5" x2="485.5" y2="124" stroke="#0f0"/>
<line x1="492.5" y1="110.5" x2="492.5" y2="124" stroke="#0f0"/>
<polygon points="482,109 484,109 484,110 482,110" fill="#0f0" stroke="none"/>
<polygon points="494,109 496,109 496,110 494,110" fill="#0f0" stroke="none"/>
<line x1="535.5" y1="101.5" x2="545.5" y2="101.5" stroke="#0f0"/>
<line x1="535.5" y1="100" x2="535.5" y2="123" stroke="#0f0"/>
<line x1="545.5" y1="100" x2="545.5" y2="123" stroke="#0f0"/>
<polygon points="538,100 539,100 539,101 538,101" fill="#0f0" stroke="none"/>
<polygon points="543,100 544,100 544,101 543,101" fill="#0f0" stroke="none"/>
<line x1="514.5" y1="236.5" x2="514.5" y2="285" stroke="#0f0"/>
<line x1="512" y1="236.5" x2="520" y2="236.5" stroke="#0f0"/>
<line x1="514.5" y1="256.5" x2="521.5" y2="256.5" stroke="#0f0"/>
<polygon points="514,237 516,237 516,241 514,241" fill="#0f0" stroke="none"/>
<polygon points="514,252 516,252 516,256 514,256" fill="#0f0" stroke="none"/>
<polygon points="514.5,266 509,270 514.5,270" fill="#0f0" stroke="none"/>
<line x1="539.5" y1="230.5" x2="539.5" y2="261" stroke="#0f0"/>
<polygon points="539,231 541,231 541,236 539,236" fill="#0f0" stroke="none"/>
<polygon points="539,256 541,256 541,261 539,261" fill="#0f0" stroke="none"/>
<line x1="342.5" y1="460.5" x2="567.5" y2="460.5" stroke="#fff"/>
<line x1="342.5" y1="469.5" x2="567.5" y2="469.5" stroke="#fff"/>
<line x1="342.5" y1="478.5" x2="567.5" y2="478.5" stroke="#fff"/>
<line x1="342.5" y1="487.5" x2="567.5" y2="487.5" stroke="#fff"/>
<line x1="342.5" y1="495.5" x2="567.5" y2="495.5" stroke="#fff"/>
<line x1="342.5" y1="504.5" x2="567.5" y2="504.5" stroke="#fff"/>
<line x1="342.5" y1="513.5" x2="567.5" y2="513.5" stroke="#fff"/>
<line x1="342.5" y1="522.5" x2="567.5" y2="522.5" stroke="#fff"/>
<line x1="342.5" y1="460.5" x2="342.5" y2="530.5" stroke="#fff"/>
<line x1="352.5" y1="460.5" x2="352.5" y2="530.5" stroke="#fff"/>
<line x1="402.5" y1="460.5" x2="402.5" y2="530.5" stroke="#fff"/>
<line x1="457.5" y1="460.5" x2="457.5" y2="530.5" stroke="#fff"/>
<line x1="467.5" y1="460.5" x2="467.5" y2="530.5" stroke="#fff"/>
<line x1="514.5" y1="460.5" x2="514.5" y2="530.5" stroke="#fff"/>
<line x1="527.5" y1="460.5" x2="527.5" y2="530.5" stroke="#fff"/>
<line x1="542.5" y1="460.5" x2="542.5" y2="530.5" stroke="#fff"/>
<line x1="567.5" y1="425.5" x2="567.5" y2="530.5" stroke="#fff"/>
<line x1="567.5" y1="425.5" x2="791.5" y2="425.5" stroke="#fff"/>
<line x1="567.5" y1="434.5" x2="791.5" y2="434.5" stroke="#fff"/>
<line x1="567.5" y1="443.5" x2="791.5" y2="443.5" stroke="#fff"/>
<line x1="567.5" y1="460.5" x2="791.5" y2="460.5" stroke="#fff"/>
<line x1="577.5" y1="425.5" x2="577.5" y2="460.5" stroke="#fff"/>
<line x1="627.5" y1="425.5" x2="627.5" y2="460.5" stroke="#fff"/>
<line x1="681.5" y1="425.5" x2="681.5" y2="460.5" stroke="#fff"/>
<line x1="691.5" y1="425.5" x2="691.5" y2="460.5" stroke="#fff"/>
<line x1="739.5" y1="425.5" x2="739.5" y2="460.5" stroke="#fff"/>
<line x1="751.5" y1="425.5" x2="751.5" y2="460.5" stroke="#fff"/>
<line x1="766.5" y1="425.5" x2="766.5" y2="460.5" stroke="#fff"/>
<line x1="739.5" y1="452.5" x2="766.5" y2="452.5" stroke="#fff"/>
<line x1="751.5" y1="452.5" x2="751.5" y2="460.5" stroke="#000"/>
<line x1="567.5" y1="469.5" x2="666.5" y2="469.5" stroke="#fff"/>
<line x1="567.5" y1="478.5" x2="666.5" y2="478.5" stroke="#fff"/>
<line x1="567.5" y1="487.5" x2="666.5" y2="487.5" stroke="#fff"/>
<line x1="567.5" y1="495.5" x2="666.5" y2="495.5" stroke="#fff"/>
<line x1="567.5" y1="504.5" x2="666.5" y2="504.5" stroke="#fff"/>
<line x1="567.5" y1="513.5" x2="666.5" y2="513.5" stroke="#fff"/>
<line x1="567.5" y1="522.5" x2="666.5" y2="522.5" stroke="#fff"/>
<line x1="579.5" y1="460.5" x2="579.5" y2="495.5" stroke="#fff"/>
<line x1="592.5" y1="460.5" x2="592.5" y2="495.5" stroke="#fff"/>
<line x1="612.5" y1="460.5" x2="612.5" y2="495.5" stroke="#fff"/>
<line x1="632.5" y1="460.5" x2="632.5" y2="495.5" stroke="#fff"/>
<line x1="647.5" y1="460.5" x2="647.5" y2="495.5" stroke="#fff"/>
<line x1="582.5" y1="495.5" x2="582.5" y2="530.5" stroke="#fff"/>
<line x1="597.5" y1="495.5" x2="597.5" y2="530.5" stroke="#fff"/>
<line x1="617.5" y1="495.5" x2="617.5" y2="530.5" stroke="#fff"/>
<line x1="632.5" y1="495.5" x2="632.5" y2="530.5" stroke="#fff"/>
<line x1="647.5" y1="495.5" x2="647.5" y2="530.5" stroke="#fff"/>
<line x1="666.5" y1="460.5" x2="666.5" y2="530.5" stroke="#fff"/>
<line x1="729.5" y1="460.5" x2="729.5" y2="530.5" stroke="#fff"/>
<line x1="729.5" y1="483.5" x2="791.5" y2="483.5" stroke="#fff"/>
<line x1="666.5" y1="495.5" x2="729.5" y2="495.5" stroke="#fff"/>
<line x1="666.5" y1="508.5" x2="791.5" y2="508.5" stroke="#fff"/>
<line x1="666.5" y1="519.5" x2="729.5" y2="519.5" stroke="#fff"/>
<line x1="699.5" y1="495.5" x2="699.5" y2="519.5" stroke="#fff"/>
<line x1="714.5" y1="495.5" x2="714.5" y2="519.5" stroke="#fff"/>
<line x1="675.5" y1="508.5" x2="675.5" y2="519.5" stroke="#fff"/>
<line x1="683.5" y1="508.5" x2="683.5" y2="519.5" stroke="#fff"/>
<line x1="691.5" y1="508.5" x2="691.5" y2="519.5" stroke="#fff"/>
<line x1="698.5" y1="519.5" x2="698.5" y2="530.5" stroke="#fff"/>
</g>
<g opacity="0.999">
<text transform="translate(120.4 80.9) scale(0.6 1)" font-size="9.8" fill="#fff" stroke="#fff" stroke-width="0.6" stroke-linejoin="round" text-anchor="middle" font-weight="bold">2</text>
<text transform="translate(120 238.8) scale(0.6 1)" font-size="9.8" fill="#fff" stroke="#fff" stroke-width="0.6" stroke-linejoin="round" text-anchor="middle" font-weight="bold">1</text>
<text transform="translate(230.3 73.9) scale(0.78 1)" font-size="6.4" fill="#0f0" stroke="#0f0" stroke-width="0.7" stroke-linejoin="round" text-anchor="middle" font-weight="bold">135</text>
<text transform="translate(108.6 217.5) rotate(-90) scale(0.78 1)" font-size="6.4" fill="#0f0" stroke="#0f0" stroke-width="0.7" stroke-linejoin="round" text-anchor="middle" font-weight="bold">176</text>
<text transform="translate(136.3 433.3) rotate(-90) scale(0.78 1)" font-size="6.4" fill="#0f0" stroke="#0f0" stroke-width="0.7" stroke-linejoin="round" text-anchor="middle" font-weight="bold">112</text>
<text transform="translate(441.5 80.8) scale(0.6 1)" font-size="9.8" fill="#fff" stroke="#fff" stroke-width="0.6" stroke-linejoin="round" text-anchor="middle" font-weight="bold">7</text>
<text transform="translate(488 80.8) scale(0.6 1)" font-size="9.8" fill="#fff" stroke="#fff" stroke-width="0.6" stroke-linejoin="round" text-anchor="middle" font-weight="bold">8</text>
<text transform="translate(521 80.8) scale(0.6 1)" font-size="9.8" fill="#fff" stroke="#fff" stroke-width="0.6" stroke-linejoin="round" text-anchor="middle" font-weight="bold">9</text>
<text transform="translate(545 80.8) scale(0.6 1)" font-size="9.8" fill="#fff" stroke="#fff" stroke-width="0.6" stroke-linejoin="round" text-anchor="middle" font-weight="bold">10</text>
<text transform="translate(441.5 116.6) scale(0.6 1)" font-size="9.8" fill="#fff" stroke="#fff" stroke-width="0.6" stroke-linejoin="round" text-anchor="middle" font-weight="bold">6</text>
<text transform="translate(441.5 170.7) scale(0.6 1)" font-size="9.8" fill="#fff" stroke="#fff" stroke-width="0.6" stroke-linejoin="round" text-anchor="middle" font-weight="bold">5</text>
<text transform="translate(441.6 192.7) scale(0.6 1)" font-size="9.8" fill="#fff" stroke="#fff" stroke-width="0.6" stroke-linejoin="round" text-anchor="middle" font-weight="bold">4</text>
<text transform="translate(441.5 222) scale(0.6 1)" font-size="9.8" fill="#fff" stroke="#fff" stroke-width="0.6" stroke-linejoin="round" text-anchor="middle" font-weight="bold">3</text>
<text transform="translate(490.3 108.6) scale(0.62 1)" font-size="8" fill="#0f0" stroke="#0f0" stroke-width="0.7" stroke-linejoin="round" text-anchor="middle" font-weight="bold">12</text>
<text transform="translate(514 278.5) rotate(-90) scale(0.7 1)" font-size="7" fill="#0f0" stroke="#0f0" stroke-width="0.7" stroke-linejoin="round" text-anchor="middle" font-weight="bold">14</text>
<text transform="translate(538.4 255) rotate(-90) scale(0.78 1)" font-size="6.4" fill="#0f0" stroke="#0f0" stroke-width="0.7" stroke-linejoin="round" text-anchor="start" font-weight="bold">25H7/g6</text>
<text font-family="'Liberation Serif', 'Noto Serif CJK SC', serif" transform="translate(709.3 239.5) scale(0.62 1)" font-size="13.5" fill="#0f0" stroke="#0f0" stroke-width="0.6" stroke-linejoin="round" text-anchor="middle" font-weight="bold">技术要求</text>
<text font-family="'Liberation Serif', 'Noto Serif CJK SC', serif" transform="translate(648.6 258.3) scale(0.66 1)" font-size="9.2" fill="#0f0" stroke="#0f0" stroke-width="0.6" stroke-linejoin="round" text-anchor="start" font-weight="bold">1、零件在装配前必须清理和清洗干净，不得</text>
<text font-family="'Liberation Serif', 'Noto Serif CJK SC', serif" transform="translate(648.6 270.6) scale(0.66 1)" font-size="9.2" fill="#0f0" stroke="#0f0" stroke-width="0.6" stroke-linejoin="round" text-anchor="start" font-weight="bold">有毛刺、飞边、氧化皮、锈蚀、切屑、油污、</text>
<text font-family="'Liberation Serif', 'Noto Serif CJK SC', serif" transform="translate(648.6 281.2) scale(0.66 1)" font-size="9.2" fill="#0f0" stroke="#0f0" stroke-width="0.6" stroke-linejoin="round" text-anchor="start" font-weight="bold">着色剂和灰尘等。</text>
<text font-family="'Liberation Serif', 'Noto Serif CJK SC', serif" transform="translate(648.6 293.6) scale(0.66 1)" font-size="9.2" fill="#0f0" stroke="#0f0" stroke-width="0.6" stroke-linejoin="round" text-anchor="start" font-weight="bold">2、装配前应对零、部件的主要配合尺寸，特</text>
<text font-family="'Liberation Serif', 'Noto Serif CJK SC', serif" transform="translate(648.6 306) scale(0.66 1)" font-size="9.2" fill="#0f0" stroke="#0f0" stroke-width="0.6" stroke-linejoin="round" text-anchor="start" font-weight="bold">别是过盈配合尺寸及相关精度进行复查。</text>
<text font-family="'Liberation Serif', 'Noto Serif CJK SC', serif" transform="translate(648.6 318) scale(0.66 1)" font-size="9.2" fill="#0f0" stroke="#0f0" stroke-width="0.6" stroke-linejoin="round" text-anchor="start" font-weight="bold">3、装配过程中零件不允许磕、碰、划伤和锈</text>
<text font-family="'Liberation Serif', 'Noto Serif CJK SC', serif" transform="translate(648.6 329.2) scale(0.66 1)" font-size="9.2" fill="#0f0" stroke="#0f0" stroke-width="0.6" stroke-linejoin="round" text-anchor="start" font-weight="bold">蚀。</text>
<text transform="translate(344.2 467.5) scale(0.62 1)" font-size="6.6" fill="#fff" stroke="#fff" stroke-width="0.75" stroke-linejoin="round" text-anchor="start" font-weight="bold">10</text>
<text transform="translate(354.2 467.5) scale(0.6 1)" font-size="6.6" fill="#fff" stroke="#fff" stroke-width="0.75" stroke-linejoin="round" text-anchor="start" font-weight="bold">JB/T8045.5-1999</text>
<text font-family="'Liberation Serif', 'Noto Serif CJK SC', serif" transform="translate(404.2 467.5) scale(0.64 1)" font-size="6.6" fill="#fff" stroke="#fff" stroke-width="0.7" stroke-linejoin="round" text-anchor="start" font-weight="bold">钻套螺钉 M5X1</text>
<text transform="translate(459.5 467.5) scale(0.62 1)" font-size="6.6" fill="#fff" stroke="#fff" stroke-width="0.75" stroke-linejoin="round" text-anchor="start" font-weight="bold">2</text>
<text font-family="'Liberation Serif', 'Noto Serif CJK SC', serif" transform="translate(469.5 467.5) scale(0.62 1)" font-size="6.6" fill="#fff" stroke="#fff" stroke-width="0.7" stroke-linejoin="round" text-anchor="start" font-weight="bold">45钢</text>
<text transform="translate(344.2 476.5) scale(0.62 1)" font-size="6.6" fill="#fff" stroke="#fff" stroke-width="0.75" stroke-linejoin="round" text-anchor="start" font-weight="bold">9</text>
<text transform="translate(354.2 476.5) scale(0.6 1)" font-size="6.6" fill="#fff" stroke="#fff" stroke-width="0.75" stroke-linejoin="round" text-anchor="start" font-weight="bold">8</text>
<text font-family="'Liberation Serif', 'Noto Serif CJK SC', serif" transform="translate(404.2 476.5) scale(0.64 1)" font-size="6.6" fill="#fff" stroke="#fff" stroke-width="0.7" stroke-linejoin="round" text-anchor="start" font-weight="bold">快换钻套</text>
<text transform="translate(459.5 476.5) scale(0.62 1)" font-size="6.6" fill="#fff" stroke="#fff" stroke-width="0.75" stroke-linejoin="round" text-anchor="start" font-weight="bold">2</text>
<text transform="translate(469.5 476.5) scale(0.62 1)" font-size="6.6" fill="#fff" stroke="#fff" stroke-width="0.75" stroke-linejoin="round" text-anchor="start" font-weight="bold">45</text>
<text transform="translate(344.2 485.5) scale(0.62 1)" font-size="6.6" fill="#fff" stroke="#fff" stroke-width="0.75" stroke-linejoin="round" text-anchor="start" font-weight="bold">8</text>
<text transform="translate(354.2 485.5) scale(0.6 1)" font-size="6.6" fill="#fff" stroke="#fff" stroke-width="0.75" stroke-linejoin="round" text-anchor="start" font-weight="bold">GB/T70.1-2000</text>
<text font-family="'Liberation Serif', 'Noto Serif CJK SC', serif" transform="translate(404.2 485.5) scale(0.64 1)" font-size="6.6" fill="#fff" stroke="#fff" stroke-width="0.7" stroke-linejoin="round" text-anchor="start" font-weight="bold">内六角圆柱头螺钉 M6X16</text>
<text transform="translate(459.5 485.5) scale(0.62 1)" font-size="6.6" fill="#fff" stroke="#fff" stroke-width="0.75" stroke-linejoin="round" text-anchor="start" font-weight="bold">2</text>
<text transform="translate(469.5 485.5) scale(0.62 1)" font-size="6.6" fill="#fff" stroke="#fff" stroke-width="0.75" stroke-linejoin="round" text-anchor="start" font-weight="bold"></text>
<text transform="translate(344.2 494.5) scale(0.62 1)" font-size="6.6" fill="#fff" stroke="#fff" stroke-width="0.75" stroke-linejoin="round" text-anchor="start" font-weight="bold">7</text>
<text transform="translate(354.2 494.5) scale(0.6 1)" font-size="6.6" fill="#fff" stroke="#fff" stroke-width="0.75" stroke-linejoin="round" text-anchor="start" font-weight="bold">6</text>
<text font-family="'Liberation Serif', 'Noto Serif CJK SC', serif" transform="translate(404.2 494.5) scale(0.64 1)" font-size="6.6" fill="#fff" stroke="#fff" stroke-width="0.7" stroke-linejoin="round" text-anchor="start" font-weight="bold">圆柱销A型 10X35</text>
<text transform="translate(459.5 494.5) scale(0.62 1)" font-size="6.6" fill="#fff" stroke="#fff" stroke-width="0.75" stroke-linejoin="round" text-anchor="start" font-weight="bold">1</text>
<text transform="translate(469.5 494.5) scale(0.62 1)" font-size="6.6" fill="#fff" stroke="#fff" stroke-width="0.75" stroke-linejoin="round" text-anchor="start" font-weight="bold">35</text>
<text transform="translate(344.2 502.5) scale(0.62 1)" font-size="6.6" fill="#fff" stroke="#fff" stroke-width="0.75" stroke-linejoin="round" text-anchor="start" font-weight="bold">6</text>
<text transform="translate(354.2 502.5) scale(0.6 1)" font-size="6.6" fill="#fff" stroke="#fff" stroke-width="0.75" stroke-linejoin="round" text-anchor="start" font-weight="bold">10</text>
<text font-family="'Liberation Serif', 'Noto Serif CJK SC', serif" transform="translate(404.2 502.5) scale(0.64 1)" font-size="6.6" fill="#fff" stroke="#fff" stroke-width="0.7" stroke-linejoin="round" text-anchor="start" font-weight="bold">开口垫片</text>
<text transform="translate(459.5 502.5) scale(0.62 1)" font-size="6.6" fill="#fff" stroke="#fff" stroke-width="0.75" stroke-linejoin="round" text-anchor="start" font-weight="bold">1</text>
<text transform="translate(469.5 502.5) scale(0.62 1)" font-size="6.6" fill="#fff" stroke="#fff" stroke-width="0.75" stroke-linejoin="round" text-anchor="start" font-weight="bold">45</text>
<text transform="translate(344.2 511.5) scale(0.62 1)" font-size="6.6" fill="#fff" stroke="#fff" stroke-width="0.75" stroke-linejoin="round" text-anchor="start" font-weight="bold">5</text>
<text transform="translate(354.2 511.5) scale(0.6 1)" font-size="6.6" fill="#fff" stroke="#fff" stroke-width="0.75" stroke-linejoin="round" text-anchor="start" font-weight="bold">1</text>
<text font-family="'Liberation Serif', 'Noto Serif CJK SC', serif" transform="translate(404.2 511.5) scale(0.64 1)" font-size="6.6" fill="#fff" stroke="#fff" stroke-width="0.7" stroke-linejoin="round" text-anchor="start" font-weight="bold">心轴</text>
<text transform="translate(459.5 511.5) scale(0.62 1)" font-size="6.6" fill="#fff" stroke="#fff" stroke-width="0.75" stroke-linejoin="round" text-anchor="start" font-weight="bold">1</text>
<text transform="translate(469.5 511.5) scale(0.62 1)" font-size="6.6" fill="#fff" stroke="#fff" stroke-width="0.75" stroke-linejoin="round" text-anchor="start" font-weight="bold">45</text>
<text transform="translate(344.2 520.5) scale(0.62 1)" font-size="6.6" fill="#fff" stroke="#fff" stroke-width="0.75" stroke-linejoin="round" text-anchor="start" font-weight="bold">4</text>
<text transform="translate(354.2 520.5) scale(0.6 1)" font-size="6.6" fill="#fff" stroke="#fff" stroke-width="0.75" stroke-linejoin="round" text-anchor="start" font-weight="bold">GB95-2002</text>
<text font-family="'Liberation Serif', 'Noto Serif CJK SC', serif" transform="translate(404.2 520.5) scale(0.64 1)" font-size="6.6" fill="#fff" stroke="#fff" stroke-width="0.7" stroke-linejoin="round" text-anchor="start" font-weight="bold">平垫圈-C级 12</text>
<text transform="translate(459.5 520.5) scale(0.62 1)" font-size="6.6" fill="#fff" stroke="#fff" stroke-width="0.75" stroke-linejoin="round" text-anchor="start" font-weight="bold">2</text>
<text font-family="'Liberation Serif', 'Noto Serif CJK SC', serif" transform="translate(469.5 520.5) scale(0.62 1)" font-size="6.6" fill="#fff" stroke="#fff" stroke-width="0.7" stroke-linejoin="round" text-anchor="start" font-weight="bold">钢</text>
<text transform="translate(344.2 529.5) scale(0.62 1)" font-size="6.6" fill="#fff" stroke="#fff" stroke-width="0.75" stroke-linejoin="round" text-anchor="start" font-weight="bold">3</text>
<text transform="translate(354.2 529.5) scale(0.6 1)" font-size="6.6" fill="#fff" stroke="#fff" stroke-width="0.75" stroke-linejoin="round" text-anchor="start" font-weight="bold">GB/T41-2000</text>
<text font-family="'Liberation Serif', 'Noto Serif CJK SC', serif" transform="translate(404.2 529.5) scale(0.64 1)" font-size="6.6" fill="#fff" stroke="#fff" stroke-width="0.7" stroke-linejoin="round" text-anchor="start" font-weight="bold">六角螺母-C级 M12</text>
<text transform="translate(459.5 529.5) scale(0.62 1)" font-size="6.6" fill="#fff" stroke="#fff" stroke-width="0.75" stroke-linejoin="round" text-anchor="start" font-weight="bold">1</text>
<text font-family="'Liberation Serif', 'Noto Serif CJK SC', serif" transform="translate(469.5 529.5) scale(0.62 1)" font-size="6.6" fill="#fff" stroke="#fff" stroke-width="0.7" stroke-linejoin="round" text-anchor="start" font-weight="bold">钢</text>
<text font-family="'Liberation Serif', 'Noto Serif CJK SC', serif" transform="translate(544.2 494.5) scale(0.6 1)" font-size="6.6" fill="#fff" stroke="#fff" stroke-width="0.7" stroke-linejoin="round" text-anchor="start" font-weight="bold">配作</text>
<text transform="translate(569.2 432.8) scale(0.62 1)" font-size="6.6" fill="#fff" stroke="#fff" stroke-width="0.75" stroke-linejoin="round" text-anchor="start" font-weight="bold">2</text>
<text transform="translate(579.5 432.8) scale(0.62 1)" font-size="6.6" fill="#fff" stroke="#fff" stroke-width="0.75" stroke-linejoin="round" text-anchor="start" font-weight="bold">2</text>
<text font-family="'Liberation Serif', 'Noto Serif CJK SC', serif" transform="translate(629.5 432.8) scale(0.6 1)" font-size="6.6" fill="#fff" stroke="#fff" stroke-width="0.7" stroke-linejoin="round" text-anchor="start" font-weight="bold">钻模板</text>
<text transform="translate(683.3 432.8) scale(0.62 1)" font-size="6.6" fill="#fff" stroke="#fff" stroke-width="0.75" stroke-linejoin="round" text-anchor="start" font-weight="bold">1</text>
<text transform="translate(693.5 432.8) scale(0.55 1)" font-size="6.6" fill="#fff" stroke="#fff" stroke-width="0.75" stroke-linejoin="round" text-anchor="start" font-weight="bold">HT200</text>
<text transform="translate(569.2 441.8) scale(0.62 1)" font-size="6.6" fill="#fff" stroke="#fff" stroke-width="0.75" stroke-linejoin="round" text-anchor="start" font-weight="bold">1</text>
<text transform="translate(579.5 441.8) scale(0.62 1)" font-size="6.6" fill="#fff" stroke="#fff" stroke-width="0.75" stroke-linejoin="round" text-anchor="start" font-weight="bold">1</text>
<text font-family="'Liberation Serif', 'Noto Serif CJK SC', serif" transform="translate(629.5 441.8) scale(0.6 1)" font-size="6.6" fill="#fff" stroke="#fff" stroke-width="0.7" stroke-linejoin="round" text-anchor="start" font-weight="bold">夹具体</text>
<text transform="translate(683.3 441.8) scale(0.62 1)" font-size="6.6" fill="#fff" stroke="#fff" stroke-width="0.75" stroke-linejoin="round" text-anchor="start" font-weight="bold">1</text>
<text transform="translate(693.5 441.8) scale(0.55 1)" font-size="6.6" fill="#fff" stroke="#fff" stroke-width="0.75" stroke-linejoin="round" text-anchor="start" font-weight="bold">HT200</text>
<text font-family="'Liberation Serif', 'Noto Serif CJK SC', serif" transform="translate(572.5 455.6) scale(0.5 1)" font-size="8.6" fill="#fff" stroke="#fff" stroke-width="0.7" stroke-linejoin="round" text-anchor="middle" font-weight="bold">序号</text>
<text font-family="'Liberation Serif', 'Noto Serif CJK SC', serif" transform="translate(602 455.6) scale(0.6 1)" font-size="8.6" fill="#fff" stroke="#fff" stroke-width="0.7" stroke-linejoin="round" text-anchor="middle" font-weight="bold">代号</text>
<text font-family="'Liberation Serif', 'Noto Serif CJK SC', serif" transform="translate(654.7 455.6) scale(0.6 1)" font-size="8.6" fill="#fff" stroke="#fff" stroke-width="0.7" stroke-linejoin="round" text-anchor="middle" font-weight="bold">名称</text>
<text font-family="'Liberation Serif', 'Noto Serif CJK SC', serif" transform="translate(686.5 455.6) scale(0.5 1)" font-size="8.6" fill="#fff" stroke="#fff" stroke-width="0.7" stroke-linejoin="round" text-anchor="middle" font-weight="bold">数量</text>
<text font-family="'Liberation Serif', 'Noto Serif CJK SC', serif" transform="translate(715.7 455.6) scale(0.6 1)" font-size="8.6" fill="#fff" stroke="#fff" stroke-width="0.7" stroke-linejoin="round" text-anchor="middle" font-weight="bold">材料</text>
<text font-family="'Liberation Serif', 'Noto Serif CJK SC', serif" transform="translate(745.5 451) scale(0.62 1)" font-size="6.6" fill="#fff" stroke="#fff" stroke-width="0.7" stroke-linejoin="round" text-anchor="middle" font-weight="bold">单件</text>
<text font-family="'Liberation Serif', 'Noto Serif CJK SC', serif" transform="translate(759 451) scale(0.62 1)" font-size="6.6" fill="#fff" stroke="#fff" stroke-width="0.7" stroke-linejoin="round" text-anchor="middle" font-weight="bold">总计</text>
<text font-family="'Liberation Serif', 'Noto Serif CJK SC', serif" transform="translate(753 459.5) scale(0.62 1)" font-size="6.6" fill="#fff" stroke="#fff" stroke-width="0.7" stroke-linejoin="round" text-anchor="middle" font-weight="bold">重量</text>
<text font-family="'Liberation Serif', 'Noto Serif CJK SC', serif" transform="translate(779 455.6) scale(0.6 1)" font-size="8.6" fill="#fff" stroke="#fff" stroke-width="0.7" stroke-linejoin="round" text-anchor="middle" font-weight="bold">备注</text>
<text font-family="'Liberation Serif', 'Noto Serif CJK SC', serif" transform="translate(573.5 494.2) scale(0.62 1)" font-size="6.6" fill="#fff" stroke="#fff" stroke-width="0.7" stroke-linejoin="round" text-anchor="middle" font-weight="bold">标记</text>
<text font-family="'Liberation Serif', 'Noto Serif CJK SC', serif" transform="translate(586 494.2) scale(0.62 1)" font-size="6.6" fill="#fff" stroke="#fff" stroke-width="0.7" stroke-linejoin="round" text-anchor="middle" font-weight="bold">处数</text>
<text font-family="'Liberation Serif', 'Noto Serif CJK SC', serif" transform="translate(602 494.2) scale(0.75 1)" font-size="6.6" fill="#fff" stroke="#fff" stroke-width="0.7" stroke-linejoin="round" text-anchor="middle" font-weight="bold">分区</text>
<text font-family="'Liberation Serif', 'Noto Serif CJK SC', serif" transform="translate(622 494.2) scale(0.5 1)" font-size="6.6" fill="#fff" stroke="#fff" stroke-width="0.7" stroke-linejoin="round" text-anchor="middle" font-weight="bold">更改文件号</text>
<text font-family="'Liberation Serif', 'Noto Serif CJK SC', serif" transform="translate(640 494.2) scale(0.7 1)" font-size="6.6" fill="#fff" stroke="#fff" stroke-width="0.7" stroke-linejoin="round" text-anchor="middle" font-weight="bold">签名</text>
<text font-family="'Liberation Serif', 'Noto Serif CJK SC', serif" transform="translate(656.5 494.2) scale(0.75 1)" font-size="6.6" fill="#fff" stroke="#fff" stroke-width="0.7" stroke-linejoin="round" text-anchor="middle" font-weight="bold">年月日</text>
<text font-family="'Liberation Serif', 'Noto Serif CJK SC', serif" transform="translate(569.2 502.8) scale(0.8 1)" font-size="6.6" fill="#fff" stroke="#fff" stroke-width="0.7" stroke-linejoin="round" text-anchor="start" font-weight="bold">设计</text>
<text font-family="'Liberation Serif', 'Noto Serif CJK SC', serif" transform="translate(618.5 502.8) scale(0.62 1)" font-size="6.6" fill="#fff" stroke="#fff" stroke-width="0.7" stroke-linejoin="round" text-anchor="start" font-weight="bold">标准化</text>
<text font-family="'Liberation Serif', 'Noto Serif CJK SC', serif" transform="translate(569.2 520.8) scale(0.8 1)" font-size="6.6" fill="#fff" stroke="#fff" stroke-width="0.7" stroke-linejoin="round" text-anchor="start" font-weight="bold">审核</text>
<text font-family="'Liberation Serif', 'Noto Serif CJK SC', serif" transform="translate(569.2 529.3) scale(0.8 1)" font-size="6.6" fill="#fff" stroke="#fff" stroke-width="0.7" stroke-linejoin="round" text-anchor="start" font-weight="bold">工艺</text>
<text font-family="'Liberation Serif', 'Noto Serif CJK SC', serif" transform="translate(618.5 529.3) scale(0.8 1)" font-size="6.6" fill="#fff" stroke="#fff" stroke-width="0.7" stroke-linejoin="round" text-anchor="start" font-weight="bold">批准</text>
<text font-family="'Liberation Serif', 'Noto Serif CJK SC', serif" transform="translate(682.5 505) scale(0.9 1)" font-size="6.6" fill="#fff" stroke="#fff" stroke-width="0.7" stroke-linejoin="round" text-anchor="middle" font-weight="bold">阶段标记</text>
<text font-family="'Liberation Serif', 'Noto Serif CJK SC', serif" transform="translate(707 505) scale(0.85 1)" font-size="6.6" fill="#fff" stroke="#fff" stroke-width="0.7" stroke-linejoin="round" text-anchor="middle" font-weight="bold">重量</text>
<text font-family="'Liberation Serif', 'Noto Serif CJK SC', serif" transform="translate(722 505) scale(0.85 1)" font-size="6.6" fill="#fff" stroke="#fff" stroke-width="0.7" stroke-linejoin="round" text-anchor="middle" font-weight="bold">比例</text>
<text transform="translate(722 516.8) scale(0.7 1)" font-size="6.6" fill="#fff" stroke="#fff" stroke-width="0.75" stroke-linejoin="round" text-anchor="middle" font-weight="bold">1:1</text>
<text font-family="'Liberation Serif', 'Noto Serif CJK SC', serif" transform="translate(675.7 528) scale(0.62 1)" font-size="6.6" fill="#fff" stroke="#fff" stroke-width="0.7" stroke-linejoin="round" text-anchor="middle" font-weight="bold">共</text>
<text font-family="'Liberation Serif', 'Noto Serif CJK SC', serif" transform="translate(690.7 528) scale(0.62 1)" font-size="6.6" fill="#fff" stroke="#fff" stroke-width="0.7" stroke-linejoin="round" text-anchor="middle" font-weight="bold">张</text>
<text font-family="'Liberation Serif', 'Noto Serif CJK SC', serif" transform="translate(701.5 528) scale(0.62 1)" font-size="6.6" fill="#fff" stroke="#fff" stroke-width="0.7" stroke-linejoin="round" text-anchor="middle" font-weight="bold">第</text>
<text font-family="'Liberation Serif', 'Noto Serif CJK SC', serif" transform="translate(715.7 528) scale(0.62 1)" font-size="6.6" fill="#fff" stroke="#fff" stroke-width="0.7" stroke-linejoin="round" text-anchor="middle" font-weight="bold">张</text>
</g>
</svg>
</body>
</html>
